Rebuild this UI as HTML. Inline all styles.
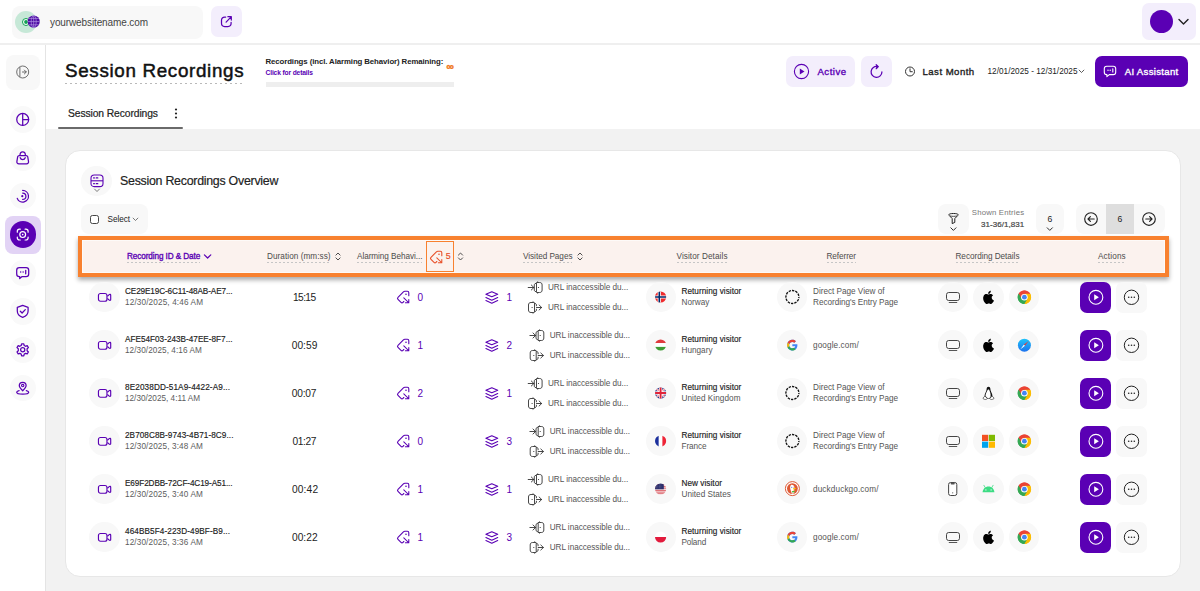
<!DOCTYPE html>
<html lang="en"><head><meta charset="utf-8"><title>Session Recordings</title>
<style>
*{margin:0;padding:0}
h1,h2{font-weight:400}
html,body{width:1200px;height:591px;overflow:hidden;background:#fff}
body{position:relative;font-family:"Liberation Sans",Arial,sans-serif;}
.t{position:absolute;white-space:nowrap;display:block}
svg{display:block;overflow:visible}
</style></head>
<body>
<header style="position:absolute;left:0;top:0;width:1200px;height:43px;background:#fff;border-bottom:2px solid #efefef">
<div style="position:absolute;left:12px;top:5.5px;width:191px;height:33px;background:#f8f8f8;border-radius:8px;"></div>
<div style="position:absolute;left:15px;top:11px;width:22px;height:22px;background:#c6e8d7;border-radius:11px;"></div>
<svg style="position:absolute;left:19px;top:14px;" width="22" height="16" viewBox="0 0 22 16" fill="none"><circle cx="7" cy="8" r="3.500" fill="#fff" stroke="#10a251" stroke-width="1"/><circle cx="7" cy="8" r="1.900" fill="#10a251"/><circle cx="14.700" cy="7.600" r="6.100" fill="#4c0aa3"/><g stroke="#b79be6" stroke-width="0.650" fill="none"><ellipse cx="14.700" cy="7.600" rx="2.500" ry="6.100"/><path d="M8.600 7.600 H20.800 M9.600 4.400 H19.800 M9.600 10.800 H19.800 M14.700 1.500 V13.700"/></g></svg>
<span class="t" style="left:50px;top:15.5px;font-size:10px;line-height:14px;color:#444;letter-spacing:-0.114px;">yourwebsitename.com</span>
<div style="position:absolute;left:211px;top:6px;width:31px;height:31px;background:#f3eefc;border-radius:7px;"><svg style="position:absolute;left:9px;top:9px;" width="13" height="13" viewBox="0 0 13 13" fill="none"><g transform="translate(0.5 0.5)"><path d="M5.2 1.6 H4.2 C2.2 1.6 1 2.8 1 4.8 V7.8 C1 9.8 2.2 11 4.2 11 H7.4 C9.4 11 10.6 9.8 10.6 7.8 V6.8" stroke="#5a00b4" stroke-width="1.25" stroke-linecap="round" stroke-linejoin="round"/><path d="M5.6 6.6 L10.6 1.4 M7.4 1.2 H10.8 V4.6" stroke="#5a00b4" stroke-width="1.25" stroke-linecap="round" stroke-linejoin="round"/></g></svg></div>
<div style="position:absolute;left:1142px;top:3px;width:54px;height:37px;background:#f3eefc;border-radius:7px;"></div>
<div style="position:absolute;left:1149.9px;top:10.2px;width:23px;height:23px;background:#5a00b4;border-radius:11.5px;"></div>
<svg style="position:absolute;left:1178px;top:18px;" width="11" height="8" viewBox="0 0 11 8" fill="none"><path d="M1 1.5 L5.5 6 L10 1.5" stroke="#222" stroke-width="1.4" stroke-linecap="round" stroke-linejoin="round"/></svg>
</header>
<aside style="position:absolute;left:0;top:45px;width:45px;height:546px;background:#fff;border-right:1px solid #e4e4e4"></aside>
<div style="position:absolute;left:5.5px;top:54.5px;width:34.5px;height:35px;background:#f8f8f8;border-radius:8px;"></div>
<svg style="position:absolute;left:15px;top:65px;" width="15" height="14" viewBox="0 0 15 14" fill="none"><g transform="translate(0.7 0)"><circle cx="7" cy="7" r="6" stroke="#5f5f5f" stroke-width="0.900"/><path d="M4.200 2 V12" stroke="#5f5f5f" stroke-width="0.900"/><path d="M6.800 7 H10.400 M8.700 5.100 L10.600 7 L8.700 8.900" stroke="#5f5f5f" stroke-width="0.950" stroke-linecap="round" stroke-linejoin="round"/></g></svg>
<div style="position:absolute;left:9.6px;top:106.2px;width:26.4px;height:26.4px;background:#f9f9f9;border-radius:13.2px;"></div>
<svg style="position:absolute;left:14px;top:111px;" width="17" height="17" viewBox="0 0 17 17" fill="none"><g transform="translate(0.7 0.4)"><circle cx="8" cy="8" r="5.950" stroke="#5a00b4" stroke-width="1.25" stroke-linecap="round" stroke-linejoin="round"/><path d="M8 2.100 V13.900 M8 8.300 H13.900" stroke="#5a00b4" stroke-width="1.25" stroke-linecap="round" stroke-linejoin="round"/></g></svg>
<div style="position:absolute;left:9.6px;top:144.6px;width:26.4px;height:26.4px;background:#f9f9f9;border-radius:13.2px;"></div>
<svg style="position:absolute;left:14px;top:149px;" width="17" height="17" viewBox="0 0 17 17" fill="none"><g transform="translate(0.7 0.8)"><path d="M4.500 5.700 H11.500 C12.300 5.700 12.800 6.100 13 6.900 L13.800 11.500 C14.100 13 13.200 14 11.800 14 H4.200 C2.800 14 1.900 13 2.200 11.500 L3 6.900 C3.200 6.100 3.700 5.700 4.500 5.700 Z" stroke="#5a00b4" stroke-width="1.25" stroke-linecap="round" stroke-linejoin="round"/><path d="M5.300 5.500 C5.300 3.400 6.300 2.100 8 2.100 C9.700 2.100 10.700 3.400 10.700 5.500" stroke="#5a00b4" stroke-width="1.25" stroke-linecap="round" stroke-linejoin="round"/><path d="M5.500 7.900 C5.900 9.200 6.800 9.800 8 9.800 C9.200 9.800 10.100 9.200 10.500 7.900" stroke="#5a00b4" stroke-width="1.25" stroke-linecap="round" stroke-linejoin="round"/></g></svg>
<div style="position:absolute;left:9.6px;top:183px;width:26.4px;height:26.4px;background:#f9f9f9;border-radius:13.2px;"></div>
<svg style="position:absolute;left:14px;top:188px;" width="17" height="17" viewBox="0 0 17 17" fill="none"><g transform="translate(0.7 0.2)"><path d="M8 2.2 A5.8 5.8 0 1 1 2.6 10.2" stroke="#5a00b4" stroke-width="1.25" stroke-linecap="round" stroke-linejoin="round"/><path d="M8 4.8 A3.2 3.2 0 0 1 8 11.2" stroke="#5a00b4" stroke-width="1.25" stroke-linecap="round" stroke-linejoin="round"/><circle cx="7.6" cy="8" r="1.1" fill="#5a00b4"/></g></svg>
<div style="position:absolute;left:4.5px;top:215.5px;width:36.5px;height:38.2px;background:#e2d3f5;border-radius:8px;"></div>
<div style="position:absolute;left:9.6px;top:221.4px;width:26.4px;height:26.4px;background:#5a00b4;border-radius:13.2px;"></div>
<svg style="position:absolute;left:14px;top:226px;" width="17" height="17" viewBox="0 0 17 17" fill="none"><g transform="translate(0.7 0.6)"><g stroke="#fff" stroke-width="1.2" stroke-linecap="round" fill="none"><path d="M2.6 5.6 V4.8 C2.6 3.4 3.4 2.6 4.8 2.6 H5.6 M10.4 2.6 H11.2 C12.6 2.6 13.4 3.4 13.4 4.8 V5.6 M13.4 10.4 V11.2 C13.4 12.6 12.6 13.4 11.2 13.4 H10.4 M5.6 13.4 H4.8 C3.4 13.4 2.6 12.6 2.6 11.2 V10.4"/><circle cx="8" cy="8" r="2.9"/><circle cx="8" cy="8" r="0.8" fill="#fff" stroke="none"/></g></g></svg>
<div style="position:absolute;left:9.6px;top:259.8px;width:26.4px;height:26.4px;background:#f9f9f9;border-radius:13.2px;"></div>
<svg style="position:absolute;left:14px;top:265px;" width="17" height="16" viewBox="0 0 17 16" fill="none"><g transform="translate(0.7 0)"><path d="M4.6 2.6 H11.4 C13 2.6 14 3.6 14 5.2 V9 C14 10.6 13 11.6 11.4 11.6 H7.4 L5 13.6 V11.6 H4.6 C3 11.6 2 10.6 2 9 V5.2 C2 3.6 3 2.6 4.600 2.6 Z" stroke="#5a00b4" stroke-width="1.25" stroke-linecap="round" stroke-linejoin="round"/><circle cx="6" cy="7.1" r="0.75" fill="#5a00b4"/><circle cx="8.4" cy="7.1" r="0.75" fill="#5a00b4"/><path d="M11 5.4 V8.8" stroke="#5a00b4" stroke-width="1.25" stroke-linecap="round" stroke-linejoin="round"/></g></svg>
<div style="position:absolute;left:9.6px;top:298.2px;width:26.4px;height:26.4px;background:#f9f9f9;border-radius:13.2px;"></div>
<svg style="position:absolute;left:14px;top:303px;" width="17" height="17" viewBox="0 0 17 17" fill="none"><g transform="translate(0.7 0.4)"><path d="M8 2 L13.4 4 V7.6 C13.4 10.6 11.4 12.8 8 14 C4.600 12.8 2.6 10.6 2.6 7.6 V4 Z" stroke="#5a00b4" stroke-width="1.25" stroke-linecap="round" stroke-linejoin="round"/><path d="M5.6 7.8 L7.4 9.6 L10.6 6.200" stroke="#5a00b4" stroke-width="1.25" stroke-linecap="round" stroke-linejoin="round"/></g></svg>
<div style="position:absolute;left:9.6px;top:336.6px;width:26.4px;height:26.4px;background:#f9f9f9;border-radius:13.2px;"></div>
<svg style="position:absolute;left:14px;top:341px;" width="17" height="17" viewBox="0 0 17 17" fill="none"><g transform="translate(0.7 0.8)"><circle cx="8" cy="8" r="2.1" stroke="#5a00b4" stroke-width="1.25" stroke-linecap="round" stroke-linejoin="round"/><path d="M6.9 2 H9.1 L9.5 3.700 L10.9 4.500 L12.5 3.900 L13.700 5.800 L12.4 7 V9 L13.700 10.2 L12.5 12.100 L10.9 11.5 L9.5 12.300 L9.1 14 H6.9 L6.5 12.300 L5.1 11.5 L3.500 12.100 L2.300 10.2 L3.600 9 V7 L2.300 5.800 L3.500 3.900 L5.1 4.500 L6.5 3.700 Z" stroke="#5a00b4" stroke-width="1.25" stroke-linecap="round" stroke-linejoin="round"/></g></svg>
<div style="position:absolute;left:9.6px;top:375px;width:26.4px;height:26.4px;background:#f9f9f9;border-radius:13.2px;"></div>
<svg style="position:absolute;left:14px;top:380px;" width="17" height="17" viewBox="0 0 17 17" fill="none"><g transform="translate(0.7 0.2)"><path d="M8 10.6 C5.600 8.4 4.600 6.900 4.600 5.400 C4.600 3.500 6.1 2.100 8 2.100 C9.900 2.100 11.4 3.500 11.4 5.400 C11.4 6.900 10.4 8.4 8 10.6 Z" stroke="#5a00b4" stroke-width="1.25" stroke-linecap="round" stroke-linejoin="round"/><circle cx="8" cy="5.400" r="1.2" stroke="#5a00b4" stroke-width="1.1"/><path d="M4.400 10.4 C2.900 10.800 2 11.400 2 12.100 C2 13.200 4.700 14 8 14 C11.300 14 14 13.200 14 12.100 C14 11.400 13.100 10.800 11.600 10.400" stroke="#5a00b4" stroke-width="1.25" stroke-linecap="round" stroke-linejoin="round"/></g></svg>
<section style="position:absolute;left:46px;top:45px;width:1154px;height:84px;background:#fff"></section>
<h1 class="t" style="left:65px;top:58.5px;font-size:18.8px;line-height:26px;color:#111;letter-spacing:0.680px;background:repeating-linear-gradient(90deg,#b9b9b9 0 2.5px,transparent 2.5px 5px) left bottom/100% 1px no-repeat;padding-bottom:1px;line-height:24px;-webkit-text-stroke:0.48px #111;">Session Recordings</h1>
<span class="t" style="left:265.5px;top:56px;font-size:7.8px;line-height:11px;font-weight:700;color:#222;letter-spacing:-0.084px;">Recordings (incl. Alarming Behavior) Remaining:</span>
<span class="t" style="left:265.5px;top:67.8px;font-size:6.7px;line-height:9px;font-weight:700;color:#5a00b4;letter-spacing:-0.145px;">Click for details</span>
<span class="t" style="left:446.4px;top:58.7px;font-size:10.5px;line-height:15px;font-weight:700;color:#f07a1f;-webkit-text-stroke:0.45px #f07a1f;">∞</span>
<div style="position:absolute;left:265.5px;top:82.3px;width:188.5px;height:5px;background:#eeeeee;border-radius:0px;"></div>
<div style="position:absolute;left:786px;top:56px;width:69px;height:31px;background:#f3eefc;border-radius:7px;"></div>
<svg style="position:absolute;left:793px;top:63px;" width="17" height="17" viewBox="0 0 17 17" fill="none"><g transform="translate(0.5 0.5)"><circle cx="8" cy="8" r="7.1" stroke="#5a00b4" stroke-width="1.1"/><path d="M6.300 5 L11 8 L6.300 11 Z" fill="#5a00b4"/></g></svg>
<span class="t" style="left:817.5px;top:65px;font-size:9.6px;line-height:13px;color:#5a00b4;letter-spacing:0.472px;-webkit-text-stroke:0.35px #5a00b4;">Active</span>
<div style="position:absolute;left:861px;top:56px;width:30.5px;height:31px;background:#f3eefc;border-radius:7px;"><svg style="position:absolute;left:8px;top:8px;" width="15" height="15" viewBox="0 0 15 15" fill="none"><path d="M12.900 7.900 A5.400 5.400 0 1 1 8.500 2.600" stroke="#5a00b4" stroke-width="1.25" stroke-linecap="round" stroke-linejoin="round"/><path d="M7.200 0.700 L9.300 2.600 L7.200 4.700" stroke="#5a00b4" stroke-width="1.25" stroke-linecap="round" stroke-linejoin="round" fill="#5a00b4"/></svg></div>
<svg style="position:absolute;left:904px;top:65px;" width="12" height="13" viewBox="0 0 12 13" fill="none"><g transform="translate(0 0.5)"><circle cx="6" cy="6" r="4.500" stroke="#333" stroke-width="1"/><path d="M6 3.300 V6.200 H8.300" stroke="#333" stroke-width="1" stroke-linecap="round" stroke-linejoin="round"/></g></svg>
<span class="t" style="left:922.5px;top:65px;font-size:9.6px;line-height:13px;color:#222;letter-spacing:0.470px;-webkit-text-stroke:0.35px #222;">Last Month</span>
<span class="t" style="left:987.5px;top:66px;font-size:8.2px;line-height:11px;color:#222;letter-spacing:0.035px;">12/01/2025 - 12/31/2025</span>
<svg style="position:absolute;left:1078px;top:69px;" width="7" height="5" viewBox="0 0 7 5" fill="none"><g transform="translate(0.5 0.5)"><path d="M0.6 0.6 L3 3 L5.4 0.6" stroke="#333" stroke-width="0.8" stroke-linecap="round" stroke-linejoin="round"/></g></svg>
<div style="position:absolute;left:1095.3px;top:56px;width:92.7px;height:31px;background:#5a00b4;border-radius:7px;"></div>
<svg style="position:absolute;left:1103px;top:65px;" width="14" height="13" viewBox="0 0 14 13" fill="none"><g transform="translate(0.5 0)"><path d="M3.200 1.200 H9.800 C11.300 1.200 12.200 2.100 12.200 3.600 V7.200 C12.200 8.700 11.300 9.600 9.800 9.600 H5.800 L3.400 11.600 V9.600 H3.200 C1.700 9.600 0.800 8.700 0.800 7.200 V3.600 C0.800 2.100 1.700 1.200 3.200 1.200 Z" stroke="#fff" stroke-width="1.1" stroke-linejoin="round"/><circle cx="4.500" cy="5.300" r="0.7" fill="#fff"/><circle cx="6.700" cy="5.300" r="0.7" fill="#fff"/><path d="M9.300 3.700 V6.900" stroke="#fff" stroke-width="1.1" stroke-linecap="round"/></g></svg>
<span class="t" style="left:1124.7px;top:65px;font-size:9.6px;line-height:13px;color:#fff;letter-spacing:0.316px;-webkit-text-stroke:0.35px #fff;">AI Assistant</span>
<span class="t" style="left:68px;top:106.5px;font-size:10.3px;line-height:14px;color:#222;letter-spacing:-0.093px;-webkit-text-stroke:0.2px #222;">Session Recordings</span>
<svg style="position:absolute;left:174px;top:108px;" width="4" height="11" viewBox="0 0 4 11" fill="none"><circle cx="2" cy="1.500" r="1.100" fill="#222"/><circle cx="2" cy="5.500" r="1.100" fill="#222"/><circle cx="2" cy="9.500" r="1.100" fill="#222"/></svg>
<div style="position:absolute;left:58px;top:127.2px;width:125.3px;height:1.7px;background:#6a6a6a;border-radius:1px;"></div>
<main style="position:absolute;left:46px;top:129px;width:1154px;height:462px;background:#f2f2f2"></main>
<div style="position:absolute;left:65.4px;top:149.7px;width:1115.6px;height:427.3px;background:#fff;border-radius:15px;box-sizing:border-box;border:1px solid #e7e7e7;"></div>
<div style="position:absolute;left:81.2px;top:165.7px;width:30.6px;height:30.6px;background:#f8f8f8;border-radius:15.3px;"></div>
<svg style="position:absolute;left:90px;top:173px;" width="14" height="15" viewBox="0 0 14 15" fill="none"><g transform="translate(0 0.8)"><rect x="1" y="1.200" width="12" height="11.600" rx="3.200" stroke="#5a00b4" stroke-width="1.100"/><path d="M1 7 H13" stroke="#5a00b4" stroke-width="1.100"/><path d="M3.600 4.100 H4.400 M6.200 4.100 H7.800 M3.600 9.900 H4.400 M6.200 9.900 H7.800" stroke="#5a00b4" stroke-width="1.2" stroke-linecap="round"/></g></svg>
<svg style="position:absolute;left:94px;top:188px;" width="6" height="5" viewBox="0 0 6 5" fill="none"><g transform="translate(0 0.5)"><path d="M0.6 0.6 L3 3 L5.4 0.6" stroke="#444" stroke-width="0.7" stroke-linecap="round" stroke-linejoin="round"/></g></svg>
<h2 class="t" style="left:120px;top:172.9px;font-size:12.4px;line-height:17px;color:#222;letter-spacing:-0.265px;-webkit-text-stroke:0.18px #222;">Session Recordings Overview</h2>
<div style="position:absolute;left:81px;top:204px;width:66.6px;height:30.4px;background:#f8f8f8;border-radius:8px;"></div>
<div style="position:absolute;left:89.6px;top:214.5px;width:9.6px;height:9.6px;background:#fff;border-radius:2.4px;box-sizing:border-box;border:1px solid #444;"></div>
<span class="t" style="left:107.5px;top:214px;font-size:8.2px;line-height:11px;color:#222;letter-spacing:-0.053px;">Select</span>
<svg style="position:absolute;left:132px;top:217px;" width="7" height="5" viewBox="0 0 7 5" fill="none"><g transform="translate(0.5 0.5)"><path d="M0.6 0.6 L3 3 L5.4 0.6" stroke="#444" stroke-width="0.7" stroke-linecap="round" stroke-linejoin="round"/></g></svg>
<div style="position:absolute;left:938px;top:204px;width:30.7px;height:30.3px;background:#f8f8f8;border-radius:8px;"></div>
<svg style="position:absolute;left:947px;top:213px;" width="13" height="12" viewBox="0 0 13 12" fill="none"><g transform="translate(0.5 0)"><path d="M1.400 1.600 C1.400 0.900 3.400 0.500 6 0.500 C8.600 0.500 10.600 0.900 10.600 1.600 C10.600 2.100 10.300 2.500 9.900 2.900 L7.300 5.600 V9.400 L4.700 10.600 V5.600 L2.100 2.900 C1.700 2.500 1.400 2.100 1.400 1.600 Z" stroke="#222" stroke-width="1" stroke-linejoin="round"/><path d="M2.600 2.900 C4.600 3.500 7.400 3.500 9.400 2.900" stroke="#222" stroke-width="0.800"/></g></svg>
<svg style="position:absolute;left:950px;top:227px;" width="7" height="5" viewBox="0 0 7 5" fill="none"><g transform="translate(0.4 0.3)"><path d="M0.4 0.5 L3 3.100 L5.6 0.5" stroke="#222" stroke-width="0.950" stroke-linecap="round" stroke-linejoin="round"/></g></svg>
<span class="t" style="right:175.7px;top:207.3px;font-size:7.8px;line-height:11px;color:#777;letter-spacing:0.168px;">Shown Entries</span>
<span class="t" style="right:175.7px;top:219px;font-size:8px;line-height:11px;color:#444;letter-spacing:0.060px;-webkit-text-stroke:0.2px #444;">31-36/1,831</span>
<div style="position:absolute;left:1036px;top:204px;width:27.8px;height:30.3px;background:#f8f8f8;border-radius:8px;"></div>
<span class="t" style="left:1049.8px;transform:translateX(-50%);top:213.2px;font-size:8.6px;line-height:12px;color:#222;">6</span>
<svg style="position:absolute;left:1046px;top:227px;" width="7" height="5" viewBox="0 0 7 5" fill="none"><g transform="translate(0.8 0.3)"><path d="M0.4 0.5 L3 3.100 L5.6 0.5" stroke="#222" stroke-width="0.950" stroke-linecap="round" stroke-linejoin="round"/></g></svg>
<div style="position:absolute;left:1075.8px;top:204px;width:89.2px;height:30.3px;background:#f8f8f8;border-radius:8px;overflow:hidden;"><div style="position:absolute;left:30.2px;top:0px;width:28px;height:30.3px;background:#dedede;border-radius:0px;"></div></div>
<svg style="position:absolute;left:1084px;top:212px;" width="14" height="14" viewBox="0 0 14 14" fill="none"><circle cx="7" cy="7" r="6.300" stroke="#222" stroke-width="1.150"/><path d="M10.200 7 H4 M6.400 4.600 L4 7 L6.400 9.400" stroke="#222" stroke-width="1.150" stroke-linecap="round" stroke-linejoin="round"/></svg>
<svg style="position:absolute;left:1142px;top:212px;transform:scaleX(-1);" width="14" height="14" viewBox="0 0 14 14" fill="none"><circle cx="7" cy="7" r="6.300" stroke="#222" stroke-width="1.150"/><path d="M10.200 7 H4 M6.400 4.600 L4 7 L6.400 9.400" stroke="#222" stroke-width="1.150" stroke-linecap="round" stroke-linejoin="round"/></svg>
<span class="t" style="left:1120px;transform:translateX(-50%);top:213.2px;font-size:8.6px;line-height:12px;color:#222;">6</span>
<div style="position:absolute;left:77.8px;top:235.8px;width:1091.4px;height:41px;background:#fbf2ee;border-radius:0px;box-sizing:border-box;border:4px solid #f8812f;box-shadow:-0.5px 3px 4.5px rgba(0,0,0,0.33),inset 0 0 0 1px rgba(255,255,255,0.6);"></div>
<span class="t" style="left:127px;top:250px;font-size:8.2px;line-height:11px;color:#5a00b4;letter-spacing:-0.105px;background:repeating-linear-gradient(90deg,#c6c6c6 0 2px,transparent 2px 4px) left bottom/100% 1px no-repeat;line-height:12px;padding-bottom:0px;margin-top:0.5px;-webkit-text-stroke:0.32px #5a00b4;">Recording ID &amp; Date</span>
<svg style="position:absolute;left:203px;top:253px;" width="10" height="7" viewBox="0 0 10 7" fill="none"><g transform="translate(0.2 0.8)"><path d="M1.2 1 L4.4 4.2 L7.6 1" stroke="#5a00b4" stroke-width="1.2" stroke-linecap="round" stroke-linejoin="round"/></g></svg>
<span class="t" style="left:267px;top:250px;font-size:8.2px;line-height:11px;color:#4c4c4c;letter-spacing:0.048px;background:repeating-linear-gradient(90deg,#c6c6c6 0 2px,transparent 2px 4px) left bottom/100% 1px no-repeat;line-height:12px;padding-bottom:0px;margin-top:0.5px;">Duration (mm:ss)</span>
<svg style="position:absolute;left:335px;top:252px;" width="6" height="9" viewBox="0 0 6 9" fill="none"><path d="M0.900 3.100 L3 1 L5.100 3.100 M0.900 5.900 L3 8 L5.100 5.900" stroke="#444" stroke-width="0.950" stroke-linecap="round" stroke-linejoin="round"/></svg>
<span class="t" style="left:357px;top:250px;font-size:8.2px;line-height:11px;color:#4c4c4c;letter-spacing:-0.056px;background:repeating-linear-gradient(90deg,#c6c6c6 0 2px,transparent 2px 4px) left bottom/100% 1px no-repeat;line-height:12px;padding-bottom:0px;margin-top:0.5px;">Alarming Behavi...</span>
<div style="position:absolute;left:426px;top:241.3px;width:28px;height:30.5px;background:transparent;border-radius:0px;box-sizing:border-box;border:1px solid #f8812f;"></div>
<svg style="position:absolute;left:429px;top:250px;" width="15" height="14" viewBox="0 0 15 14" fill="none"><g transform="translate(0.5 0)"><path d="M12.300 5.800 V2.700 C12.300 1.800 11.800 1.300 10.900 1.300 H8.300 C7.700 1.300 7.300 1.500 6.900 1.900 L1.500 7.300 C0.900 7.900 0.900 8.700 1.500 9.300 L4.500 12.300 C5.100 12.900 5.900 12.900 6.500 12.300 L7.300 11.500" stroke="#e8502a" stroke-width="1.100" stroke-linecap="round" stroke-linejoin="round"/><circle cx="9.500" cy="4.300" r="0.800" fill="#e8502a"/><path d="M7.300 7.800 L12 12.500 M12.300 9.400 V12.800 H8.900" stroke="#e8502a" stroke-width="1.050" stroke-linecap="round" stroke-linejoin="round"/></g></svg>
<span class="t" style="left:445.8px;top:250.2px;font-size:8.8px;line-height:12px;color:#e8502a;-webkit-text-stroke:0.2px #e8502a;">5</span>
<svg style="position:absolute;left:457px;top:252px;" width="7" height="9" viewBox="0 0 7 9" fill="none"><g transform="translate(0.5 0)"><path d="M0.900 3.100 L3 1 L5.100 3.100 M0.900 5.900 L3 8 L5.100 5.900" stroke="#444" stroke-width="0.950" stroke-linecap="round" stroke-linejoin="round"/></g></svg>
<span class="t" style="left:523px;top:250px;font-size:8.2px;line-height:11px;color:#4c4c4c;letter-spacing:-0.035px;background:repeating-linear-gradient(90deg,#c6c6c6 0 2px,transparent 2px 4px) left bottom/100% 1px no-repeat;line-height:12px;padding-bottom:0px;margin-top:0.5px;">Visited Pages</span>
<svg style="position:absolute;left:577px;top:252px;" width="6" height="9" viewBox="0 0 6 9" fill="none"><path d="M0.900 3.100 L3 1 L5.100 3.100 M0.900 5.900 L3 8 L5.100 5.900" stroke="#444" stroke-width="0.950" stroke-linecap="round" stroke-linejoin="round"/></svg>
<span class="t" style="left:676.5px;top:250px;font-size:8.2px;line-height:11px;color:#4c4c4c;letter-spacing:0.078px;background:repeating-linear-gradient(90deg,#c6c6c6 0 2px,transparent 2px 4px) left bottom/100% 1px no-repeat;line-height:12px;padding-bottom:0px;margin-top:0.5px;">Visitor Details</span>
<span class="t" style="left:826.5px;top:250px;font-size:8.2px;line-height:11px;color:#4c4c4c;letter-spacing:-0.076px;background:repeating-linear-gradient(90deg,#c6c6c6 0 2px,transparent 2px 4px) left bottom/100% 1px no-repeat;line-height:12px;padding-bottom:0px;margin-top:0.5px;">Referrer</span>
<span class="t" style="left:955.5px;top:250px;font-size:8.2px;line-height:11px;color:#4c4c4c;letter-spacing:-0.039px;background:repeating-linear-gradient(90deg,#c6c6c6 0 2px,transparent 2px 4px) left bottom/100% 1px no-repeat;line-height:12px;padding-bottom:0px;margin-top:0.5px;">Recording Details</span>
<span class="t" style="left:1098px;top:250px;font-size:8.2px;line-height:11px;color:#4c4c4c;letter-spacing:0.140px;background:repeating-linear-gradient(90deg,#c6c6c6 0 2px,transparent 2px 4px) left bottom/100% 1px no-repeat;line-height:12px;padding-bottom:0px;margin-top:0.5px;">Actions</span>
<div>
<div style="position:absolute;left:89.3px;top:281.8px;width:30.4px;height:30.4px;background:#f8f8f8;border-radius:15.2px;"></div>
<svg style="position:absolute;left:97px;top:292px;" width="15" height="11" viewBox="0 0 15 11" fill="none"><g transform="translate(0.7 0.7)"><rect x="0.750" y="0.750" width="8.500" height="7.800" rx="2" stroke="#5a00b4" stroke-width="1.150"/><path d="M9.700 3.500 L11.500 1.900 C12.300 1.300 13 1.700 13 2.600 V6.700 C13 7.600 12.300 8 11.500 7.400 L9.700 5.800" stroke="#5a00b4" stroke-width="1.150" stroke-linejoin="round"/></g></svg>
<span class="t" style="left:125px;top:285.6px;font-size:8.2px;line-height:11px;color:#222;letter-spacing:-0.122px;-webkit-text-stroke:0.15px #222;">CE29E19C-6C11-48AB-AE7...</span>
<span class="t" style="left:125px;top:297px;font-size:8.2px;line-height:11px;color:#5c5c5c;letter-spacing:0.135px;">12/30/2025, 4:46 AM</span>
<span class="t" style="left:293px;top:290.6px;font-size:10.2px;line-height:14px;color:#222;letter-spacing:-0.600px;">15:15</span>
<svg style="position:absolute;left:396px;top:290px;" width="15" height="14" viewBox="0 0 15 14" fill="none"><g transform="translate(0.5 0)"><path d="M12.300 5.800 V2.700 C12.300 1.800 11.800 1.300 10.900 1.300 H8.300 C7.700 1.300 7.300 1.500 6.900 1.900 L1.500 7.300 C0.900 7.900 0.900 8.700 1.500 9.300 L4.500 12.300 C5.100 12.900 5.900 12.900 6.500 12.300 L7.300 11.500" stroke="#5a00b4" stroke-width="1.100" stroke-linecap="round" stroke-linejoin="round"/><circle cx="9.500" cy="4.300" r="0.800" fill="#5a00b4"/><path d="M7.300 7.800 L12 12.500 M12.300 9.400 V12.800 H8.900" stroke="#5a00b4" stroke-width="1.050" stroke-linecap="round" stroke-linejoin="round"/></g></svg>
<span class="t" style="left:417.4px;top:290.9px;font-size:10px;line-height:14px;color:#5a00b4;">0</span>
<svg style="position:absolute;left:484px;top:290px;" width="15" height="15" viewBox="0 0 15 15" fill="none"><g transform="translate(0.7 0.7)"><path d="M7.100 1.100 L13 3.600 L7.100 6.100 L1.200 3.600 Z" stroke="#5a00b4" stroke-width="1.100" stroke-linejoin="round"/><path d="M1.200 6.900 L7.100 9.500 L13 6.900 M1.200 9.900 L7.100 12.500 L13 9.900" stroke="#5a00b4" stroke-width="1.100" stroke-linecap="round" stroke-linejoin="round"/></g></svg>
<span class="t" style="left:506.4px;top:290.9px;font-size:10px;line-height:14px;color:#5a00b4;">1</span>
<svg style="position:absolute;left:528px;top:281px;" width="15" height="13" viewBox="0 0 15 13" fill="none"><g transform="translate(0 0.5)"><path d="M0.200 6 H5.800 M3.300 3.500 L5.900 6 L3.300 8.500" stroke="#333" stroke-width="0.900" stroke-linecap="round" stroke-linejoin="round"/><path d="M9.800 0.300 L6.300 2.900 V9.100 L9.800 11.700" stroke="#333" stroke-width="0.900" stroke-linejoin="round" stroke-linecap="round"/><path d="M8.500 1.600 V10.400" stroke="#333" stroke-width="0.900"/><path d="M9 1 H11.600 C13.300 1 14.100 1.900 14.100 3.500 V8.500 C14.100 10.100 13.300 11 11.600 11 H9" stroke="#333" stroke-width="0.900"/><circle cx="10.500" cy="6" r="0.600" fill="#333"/></g></svg>
<svg style="position:absolute;left:527px;top:301px;" width="16" height="13" viewBox="0 0 16 13" fill="none"><g transform="translate(0.7 0.5)"><path d="M8.800 6 H13.900 M11.400 3.500 L14 6 L11.400 8.500" stroke="#333" stroke-width="0.900" stroke-linecap="round" stroke-linejoin="round"/><path d="M6 1 H3.300 C1.600 1 0.800 1.900 0.800 3.500 V8.500 C0.800 10.100 1.600 11 3.300 11 H6" stroke="#333" stroke-width="0.900"/><path d="M6.800 1.600 V10.400" stroke="#333" stroke-width="0.900"/><path d="M5.300 0.300 L8.700 2.900 V4.300 M8.700 7.700 V9.100 L5.300 11.700" stroke="#333" stroke-width="0.900" stroke-linejoin="round" stroke-linecap="round"/><circle cx="4.400" cy="6" r="0.600" fill="#333"/></g></svg>
<span class="t" style="left:548px;top:281.8px;font-size:8.2px;line-height:11px;color:#555;letter-spacing:-0.041px;">URL inaccessible du...</span>
<span class="t" style="left:548px;top:301.5px;font-size:8.2px;line-height:11px;color:#555;letter-spacing:-0.041px;">URL inaccessible du...</span>
<div style="position:absolute;left:645.8px;top:281.8px;width:30.4px;height:30.4px;background:#f8f8f8;border-radius:15.2px;"></div>
<svg style="position:absolute;left:654px;top:291px;" width="13" height="12" viewBox="0 0 13 12" fill="none"><g transform="translate(0.6 0)"><clipPath id="fc_no"><circle cx="6" cy="6" r="5.600"/></clipPath><g clip-path="url(#fc_no)"><rect width="12" height="12" fill="#ef2b2d"/><path d="M0 6 H12 M4.700 0 V12" stroke="#fff" stroke-width="3.200"/><path d="M0 6 H12 M4.700 0 V12" stroke="#002868" stroke-width="1.600"/></g></g></svg>
<span class="t" style="left:681.5px;top:285.8px;font-size:8.2px;line-height:11px;color:#222;letter-spacing:0.040px;-webkit-text-stroke:0.15px #222;">Returning visitor</span>
<span class="t" style="left:681.5px;top:297.1px;font-size:8.2px;line-height:11px;color:#555;letter-spacing:0.007px;">Norway</span>
<div style="position:absolute;left:777.1px;top:281.8px;width:30.4px;height:30.4px;background:#f8f8f8;border-radius:15.2px;"></div>
<svg style="position:absolute;left:784px;top:289px;" width="17" height="16" viewBox="0 0 17 16" fill="none"><g transform="translate(0.4 0)"><circle cx="8" cy="8" r="6.500" stroke="#111" stroke-width="1.350" stroke-dasharray="2.350 1.053" stroke-dashoffset="1.175"/></g></svg>
<span class="t" style="left:813px;top:285.8px;font-size:8.2px;line-height:11px;color:#555;letter-spacing:-0.015px;">Direct Page View of</span>
<span class="t" style="left:813px;top:297.1px;font-size:8.2px;line-height:11px;color:#555;letter-spacing:-0.036px;">Recording's Entry Page</span>
<div style="position:absolute;left:937.6px;top:282.1px;width:30.4px;height:30.4px;background:#f8f8f8;border-radius:15.2px;"></div>
<div style="position:absolute;left:973.3px;top:282.1px;width:30.4px;height:30.4px;background:#f8f8f8;border-radius:15.2px;"></div>
<div style="position:absolute;left:1009.1px;top:282.1px;width:30.4px;height:30.4px;background:#f8f8f8;border-radius:15.2px;"></div>
<svg style="position:absolute;left:945px;top:291px;" width="16" height="14" viewBox="0 0 16 14" fill="none"><rect x="1.500" y="1.500" width="13" height="8" rx="2.200" stroke="#444" stroke-width="1"/><path d="M4.200 11.500 H11.800" stroke="#555" stroke-width="1" stroke-linecap="round"/></svg>
<svg style="position:absolute;left:982px;top:290px;" width="13" height="15" viewBox="0 0 13 15" fill="none"><g transform="translate(0.5 0.3)"><path d="M9.200 7.400 C9.200 5.800 10.500 5.100 10.600 5 C9.800 3.900 8.700 3.800 8.300 3.700 C7.300 3.600 6.400 4.300 5.900 4.300 C5.400 4.300 4.600 3.700 3.800 3.800 C2.700 3.800 1.700 4.400 1.200 5.400 C0 7.400 0.900 10.400 2 12 C2.600 12.800 3.200 13.700 4.100 13.600 C5 13.600 5.300 13.100 6.300 13.100 C7.300 13.100 7.600 13.600 8.500 13.600 C9.400 13.600 10 12.800 10.500 12 C11.200 11.100 11.400 10.200 11.400 10.100 C11.400 10.100 9.200 9.300 9.200 7.400 Z" fill="#000"/><path d="M7.600 2.600 C8.100 2 8.400 1.200 8.300 0.400 C7.600 0.400 6.800 0.900 6.300 1.400 C5.900 1.900 5.500 2.800 5.600 3.500 C6.400 3.600 7.100 3.200 7.600 2.600 Z" fill="#000"/></g></svg>
<svg style="position:absolute;left:1017px;top:290px;" width="15" height="15" viewBox="0 0 15 15" fill="none"><g transform="translate(0.4 0.2)"><circle cx="7" cy="7" r="6.700" fill="#fff"/><path d="M7 7 L1.200 3.650 A6.700 6.700 0 0 1 12.800 3.650 Z" fill="#ea4335"/><path d="M7 7 L12.800 3.650 A6.700 6.700 0 0 1 7 13.700 Z" fill="#fbbc04"/><path d="M7 7 L7 13.700 A6.700 6.700 0 0 1 1.200 3.650 Z" fill="#34a853"/><path d="M7 3.650 H12.800 A6.700 6.700 0 0 0 1.200 3.650 L4.100 8.680 Z" fill="#ea4335"/><path d="M9.900 8.680 L12.800 3.650 H7 Z" fill="#fbbc04"/><path d="M9.900 8.680 L7 13.700 A6.700 6.700 0 0 0 12.800 3.650 Z" fill="#fbbc04"/><path d="M4.100 8.680 L1.200 3.650 A6.700 6.700 0 0 0 7 13.700 L9.900 8.680 Z" fill="#34a853"/><circle cx="7" cy="7" r="3.300" fill="#fff"/><circle cx="7" cy="7" r="2.400" fill="#4285f4"/></g></svg>
<div style="position:absolute;left:1080px;top:281.8px;width:30.7px;height:31px;background:#5a00b4;border-radius:7px;"></div>
<svg style="position:absolute;left:1087px;top:289px;" width="17" height="17" viewBox="0 0 17 17" fill="none"><g transform="translate(0.9 0.3)"><circle cx="8" cy="8" r="6.900" stroke="#fff" stroke-width="1.1"/><path d="M6.300 5 L11 8 L6.300 11 Z" fill="#fff"/></g></svg>
<div style="position:absolute;left:1116px;top:281.8px;width:30.7px;height:31px;background:#f8f8f8;border-radius:7px;"></div>
<svg style="position:absolute;left:1123px;top:289px;" width="17" height="17" viewBox="0 0 17 17" fill="none"><g transform="translate(0.5 0.3)"><circle cx="8" cy="8" r="7.200" stroke="#222" stroke-width="1"/><circle cx="5.200" cy="8" r="0.800" fill="#222"/><circle cx="8" cy="8" r="0.800" fill="#222"/><circle cx="10.800" cy="8" r="0.800" fill="#222"/></g></svg>
</div>
<div>
<div style="position:absolute;left:89.3px;top:329.8px;width:30.4px;height:30.4px;background:#f8f8f8;border-radius:15.2px;"></div>
<svg style="position:absolute;left:97px;top:340px;" width="15" height="11" viewBox="0 0 15 11" fill="none"><g transform="translate(0.7 0.7)"><rect x="0.750" y="0.750" width="8.500" height="7.800" rx="2" stroke="#5a00b4" stroke-width="1.150"/><path d="M9.700 3.500 L11.500 1.900 C12.300 1.300 13 1.700 13 2.600 V6.700 C13 7.600 12.300 8 11.500 7.400 L9.700 5.800" stroke="#5a00b4" stroke-width="1.150" stroke-linejoin="round"/></g></svg>
<span class="t" style="left:125px;top:333.6px;font-size:8.2px;line-height:11px;color:#222;letter-spacing:0.004px;-webkit-text-stroke:0.15px #222;">AFE54F03-243B-47EE-8F7...</span>
<span class="t" style="left:125px;top:345px;font-size:8.2px;line-height:11px;color:#5c5c5c;letter-spacing:0.068px;">12/30/2025, 4:16 AM</span>
<span class="t" style="left:291.7px;top:338.6px;font-size:10.2px;line-height:14px;color:#222;letter-spacing:0.050px;">00:59</span>
<svg style="position:absolute;left:396px;top:338px;" width="15" height="14" viewBox="0 0 15 14" fill="none"><g transform="translate(0.5 0)"><path d="M12.300 5.800 V2.700 C12.300 1.800 11.800 1.300 10.900 1.300 H8.300 C7.700 1.300 7.300 1.500 6.900 1.900 L1.500 7.300 C0.900 7.900 0.900 8.700 1.500 9.300 L4.500 12.300 C5.100 12.900 5.900 12.900 6.500 12.300 L7.300 11.500" stroke="#5a00b4" stroke-width="1.100" stroke-linecap="round" stroke-linejoin="round"/><circle cx="9.500" cy="4.300" r="0.800" fill="#5a00b4"/><path d="M7.300 7.800 L12 12.500 M12.300 9.400 V12.800 H8.900" stroke="#5a00b4" stroke-width="1.050" stroke-linecap="round" stroke-linejoin="round"/></g></svg>
<span class="t" style="left:417.4px;top:338.9px;font-size:10px;line-height:14px;color:#5a00b4;">1</span>
<svg style="position:absolute;left:484px;top:338px;" width="15" height="15" viewBox="0 0 15 15" fill="none"><g transform="translate(0.7 0.7)"><path d="M7.100 1.100 L13 3.600 L7.100 6.100 L1.200 3.600 Z" stroke="#5a00b4" stroke-width="1.100" stroke-linejoin="round"/><path d="M1.200 6.900 L7.100 9.500 L13 6.900 M1.200 9.900 L7.100 12.500 L13 9.900" stroke="#5a00b4" stroke-width="1.100" stroke-linecap="round" stroke-linejoin="round"/></g></svg>
<span class="t" style="left:506.4px;top:338.9px;font-size:10px;line-height:14px;color:#5a00b4;">2</span>
<svg style="position:absolute;left:529px;top:329px;" width="16" height="13" viewBox="0 0 16 13" fill="none"><g transform="translate(0.7 0.5)"><path d="M0.200 6 H5.800 M3.300 3.500 L5.900 6 L3.300 8.500" stroke="#333" stroke-width="0.900" stroke-linecap="round" stroke-linejoin="round"/><path d="M9.800 0.300 L6.300 2.900 V9.100 L9.800 11.700" stroke="#333" stroke-width="0.900" stroke-linejoin="round" stroke-linecap="round"/><path d="M8.500 1.600 V10.400" stroke="#333" stroke-width="0.900"/><path d="M9 1 H11.600 C13.300 1 14.100 1.900 14.100 3.500 V8.500 C14.100 10.100 13.300 11 11.600 11 H9" stroke="#333" stroke-width="0.900"/><circle cx="10.500" cy="6" r="0.600" fill="#333"/></g></svg>
<svg style="position:absolute;left:529px;top:349px;" width="16" height="13" viewBox="0 0 16 13" fill="none"><g transform="translate(0.4 0.5)"><path d="M8.800 6 H13.900 M11.400 3.500 L14 6 L11.400 8.500" stroke="#333" stroke-width="0.900" stroke-linecap="round" stroke-linejoin="round"/><path d="M6 1 H3.300 C1.600 1 0.800 1.900 0.800 3.500 V8.500 C0.800 10.100 1.600 11 3.300 11 H6" stroke="#333" stroke-width="0.900"/><path d="M6.800 1.600 V10.400" stroke="#333" stroke-width="0.900"/><path d="M5.300 0.300 L8.700 2.900 V4.300 M8.700 7.700 V9.100 L5.300 11.700" stroke="#333" stroke-width="0.900" stroke-linejoin="round" stroke-linecap="round"/><circle cx="4.400" cy="6" r="0.600" fill="#333"/></g></svg>
<span class="t" style="left:549.7px;top:329.8px;font-size:8.2px;line-height:11px;color:#555;letter-spacing:-0.041px;">URL inaccessible du...</span>
<span class="t" style="left:549.7px;top:349.5px;font-size:8.2px;line-height:11px;color:#555;letter-spacing:-0.041px;">URL inaccessible du...</span>
<div style="position:absolute;left:645.8px;top:329.8px;width:30.4px;height:30.4px;background:#f8f8f8;border-radius:15.2px;"></div>
<svg style="position:absolute;left:654px;top:339px;" width="13" height="12" viewBox="0 0 13 12" fill="none"><g transform="translate(0.6 0)"><clipPath id="fc_hu"><circle cx="6" cy="6" r="5.600"/></clipPath><g clip-path="url(#fc_hu)"><rect width="12" height="4.100" fill="#e03a3e"/><rect y="4.100" width="12" height="3.800" fill="#fff"/><rect y="7.900" width="12" height="4.100" fill="#3f9c35"/></g></g></svg>
<span class="t" style="left:681.5px;top:333.8px;font-size:8.2px;line-height:11px;color:#222;letter-spacing:0.040px;-webkit-text-stroke:0.15px #222;">Returning visitor</span>
<span class="t" style="left:681.5px;top:345.1px;font-size:8.2px;line-height:11px;color:#555;letter-spacing:0.008px;">Hungary</span>
<div style="position:absolute;left:777.1px;top:329.8px;width:30.4px;height:30.4px;background:#f8f8f8;border-radius:15.2px;"></div>
<svg style="position:absolute;left:787px;top:338px;" width="11" height="13" viewBox="0 0 11 13" fill="none"><g transform="translate(0 0.8) scale(0.875 0.8788)"><path d="M11.800 6.100 H6.100 V8.400 H9.400 C9.100 9.900 7.800 10.800 6.100 10.800 C4.100 10.800 2.500 9.200 2.500 7.200 C2.500 5.200 4.100 3.600 6.100 3.600 C7 3.600 7.800 3.900 8.400 4.500 L10.100 2.800 C9 1.800 7.700 1.200 6.100 1.200 C2.800 1.200 0.100 3.900 0.100 7.200 C0.100 10.500 2.800 13.200 6.100 13.200 C9.600 13.200 11.900 10.800 11.900 7.300 C11.900 6.900 11.900 6.500 11.800 6.100 Z" fill="#4285f4"/><path d="M0.750 4.500 L2.700 6 C3.200 4.600 4.500 3.600 6.100 3.600 C7 3.600 7.800 3.900 8.400 4.500 L10.100 2.800 C9 1.800 7.700 1.200 6.100 1.200 C3.800 1.200 1.750 2.500 0.750 4.500 Z" fill="#ea4335"/><path d="M0.750 4.500 C0.350 5.300 0.100 6.200 0.100 7.200 C0.100 8.200 0.350 9.100 0.750 9.900 L2.700 8.400 C2.600 8 2.500 7.600 2.500 7.200 C2.500 6.800 2.600 6.400 2.700 6 Z" fill="#fbbc05"/><path d="M6.100 13.200 C7.700 13.200 9 12.700 10 11.800 L8.100 10.300 C7.600 10.600 6.900 10.800 6.100 10.800 C4.500 10.800 3.200 9.800 2.700 8.400 L0.750 9.900 C1.750 11.900 3.800 13.200 6.100 13.200 Z" fill="#34a853"/></g></svg>
<span class="t" style="left:813px;top:339.6px;font-size:8.2px;line-height:11px;color:#555;letter-spacing:0.109px;">google.com/</span>
<div style="position:absolute;left:937.6px;top:330.1px;width:30.4px;height:30.4px;background:#f8f8f8;border-radius:15.2px;"></div>
<div style="position:absolute;left:973.3px;top:330.1px;width:30.4px;height:30.4px;background:#f8f8f8;border-radius:15.2px;"></div>
<div style="position:absolute;left:1009.1px;top:330.1px;width:30.4px;height:30.4px;background:#f8f8f8;border-radius:15.2px;"></div>
<svg style="position:absolute;left:945px;top:339px;" width="16" height="14" viewBox="0 0 16 14" fill="none"><rect x="1.500" y="1.500" width="13" height="8" rx="2.200" stroke="#444" stroke-width="1"/><path d="M4.200 11.500 H11.800" stroke="#555" stroke-width="1" stroke-linecap="round"/></svg>
<svg style="position:absolute;left:982px;top:338px;" width="13" height="15" viewBox="0 0 13 15" fill="none"><g transform="translate(0.5 0.3)"><path d="M9.200 7.400 C9.200 5.800 10.500 5.100 10.600 5 C9.800 3.900 8.700 3.800 8.300 3.700 C7.300 3.600 6.400 4.300 5.900 4.300 C5.400 4.300 4.600 3.700 3.800 3.800 C2.700 3.800 1.700 4.400 1.200 5.400 C0 7.400 0.900 10.400 2 12 C2.600 12.800 3.200 13.700 4.100 13.600 C5 13.600 5.300 13.100 6.300 13.100 C7.300 13.100 7.600 13.600 8.500 13.600 C9.400 13.600 10 12.800 10.500 12 C11.200 11.100 11.400 10.200 11.400 10.100 C11.400 10.100 9.200 9.300 9.200 7.400 Z" fill="#000"/><path d="M7.600 2.600 C8.100 2 8.400 1.200 8.300 0.400 C7.600 0.400 6.800 0.900 6.300 1.400 C5.900 1.900 5.500 2.800 5.600 3.500 C6.400 3.600 7.100 3.200 7.600 2.600 Z" fill="#000"/></g></svg>
<svg style="position:absolute;left:1017px;top:338px;" width="15" height="15" viewBox="0 0 15 15" fill="none"><g transform="translate(0.4 0.2)"><defs><linearGradient id="sfg" x1="0" y1="0" x2="0" y2="1"><stop offset="0" stop-color="#1fc4fa"/><stop offset="1" stop-color="#1c72ee"/></linearGradient></defs><circle cx="7" cy="7" r="6.500" fill="url(#sfg)"/><path d="M11.200 2.800 L7.550 7.550 L6.450 6.450 Z" fill="#f5352c"/><path d="M2.800 11.200 L6.450 6.450 L7.550 7.550 Z" fill="#fff"/></g></svg>
<div style="position:absolute;left:1080px;top:329.8px;width:30.7px;height:31px;background:#5a00b4;border-radius:7px;"></div>
<svg style="position:absolute;left:1087px;top:337px;" width="17" height="17" viewBox="0 0 17 17" fill="none"><g transform="translate(0.9 0.3)"><circle cx="8" cy="8" r="6.900" stroke="#fff" stroke-width="1.1"/><path d="M6.300 5 L11 8 L6.300 11 Z" fill="#fff"/></g></svg>
<div style="position:absolute;left:1116px;top:329.8px;width:30.7px;height:31px;background:#f8f8f8;border-radius:7px;"></div>
<svg style="position:absolute;left:1123px;top:337px;" width="17" height="17" viewBox="0 0 17 17" fill="none"><g transform="translate(0.5 0.3)"><circle cx="8" cy="8" r="7.200" stroke="#222" stroke-width="1"/><circle cx="5.200" cy="8" r="0.800" fill="#222"/><circle cx="8" cy="8" r="0.800" fill="#222"/><circle cx="10.800" cy="8" r="0.800" fill="#222"/></g></svg>
</div>
<div>
<div style="position:absolute;left:89.3px;top:377.8px;width:30.4px;height:30.4px;background:#f8f8f8;border-radius:15.2px;"></div>
<svg style="position:absolute;left:97px;top:388px;" width="15" height="11" viewBox="0 0 15 11" fill="none"><g transform="translate(0.7 0.7)"><rect x="0.750" y="0.750" width="8.500" height="7.800" rx="2" stroke="#5a00b4" stroke-width="1.150"/><path d="M9.700 3.500 L11.500 1.900 C12.300 1.300 13 1.700 13 2.600 V6.700 C13 7.600 12.300 8 11.500 7.400 L9.700 5.800" stroke="#5a00b4" stroke-width="1.150" stroke-linejoin="round"/></g></svg>
<span class="t" style="left:125px;top:381.6px;font-size:8.2px;line-height:11px;color:#222;letter-spacing:0.112px;-webkit-text-stroke:0.15px #222;">8E2038DD-51A9-4422-A9...</span>
<span class="t" style="left:125px;top:393px;font-size:8.2px;line-height:11px;color:#5c5c5c;letter-spacing:0.007px;">12/30/2025, 4:11 AM</span>
<span class="t" style="left:291.7px;top:386.6px;font-size:10.2px;line-height:14px;color:#222;letter-spacing:-0.175px;">00:07</span>
<svg style="position:absolute;left:396px;top:386px;" width="15" height="14" viewBox="0 0 15 14" fill="none"><g transform="translate(0.5 0)"><path d="M12.300 5.800 V2.700 C12.300 1.800 11.800 1.300 10.900 1.300 H8.300 C7.700 1.300 7.300 1.500 6.900 1.900 L1.500 7.300 C0.900 7.900 0.900 8.700 1.500 9.300 L4.500 12.300 C5.100 12.900 5.900 12.900 6.500 12.300 L7.300 11.500" stroke="#5a00b4" stroke-width="1.100" stroke-linecap="round" stroke-linejoin="round"/><circle cx="9.500" cy="4.300" r="0.800" fill="#5a00b4"/><path d="M7.300 7.800 L12 12.500 M12.300 9.400 V12.800 H8.900" stroke="#5a00b4" stroke-width="1.050" stroke-linecap="round" stroke-linejoin="round"/></g></svg>
<span class="t" style="left:417.4px;top:386.9px;font-size:10px;line-height:14px;color:#5a00b4;">2</span>
<svg style="position:absolute;left:484px;top:386px;" width="15" height="15" viewBox="0 0 15 15" fill="none"><g transform="translate(0.7 0.7)"><path d="M7.100 1.100 L13 3.600 L7.100 6.100 L1.200 3.600 Z" stroke="#5a00b4" stroke-width="1.100" stroke-linejoin="round"/><path d="M1.200 6.900 L7.100 9.500 L13 6.900 M1.200 9.900 L7.100 12.500 L13 9.900" stroke="#5a00b4" stroke-width="1.100" stroke-linecap="round" stroke-linejoin="round"/></g></svg>
<span class="t" style="left:506.4px;top:386.9px;font-size:10px;line-height:14px;color:#5a00b4;">1</span>
<svg style="position:absolute;left:528px;top:377px;" width="15" height="13" viewBox="0 0 15 13" fill="none"><g transform="translate(0 0.5)"><path d="M0.200 6 H5.800 M3.300 3.500 L5.900 6 L3.300 8.500" stroke="#333" stroke-width="0.900" stroke-linecap="round" stroke-linejoin="round"/><path d="M9.800 0.300 L6.300 2.900 V9.100 L9.800 11.700" stroke="#333" stroke-width="0.900" stroke-linejoin="round" stroke-linecap="round"/><path d="M8.500 1.600 V10.400" stroke="#333" stroke-width="0.900"/><path d="M9 1 H11.600 C13.300 1 14.100 1.900 14.100 3.500 V8.500 C14.100 10.100 13.300 11 11.600 11 H9" stroke="#333" stroke-width="0.900"/><circle cx="10.500" cy="6" r="0.600" fill="#333"/></g></svg>
<svg style="position:absolute;left:527px;top:397px;" width="16" height="13" viewBox="0 0 16 13" fill="none"><g transform="translate(0.7 0.5)"><path d="M8.800 6 H13.900 M11.400 3.500 L14 6 L11.400 8.500" stroke="#333" stroke-width="0.900" stroke-linecap="round" stroke-linejoin="round"/><path d="M6 1 H3.300 C1.600 1 0.800 1.900 0.800 3.500 V8.500 C0.800 10.100 1.600 11 3.300 11 H6" stroke="#333" stroke-width="0.900"/><path d="M6.800 1.600 V10.400" stroke="#333" stroke-width="0.900"/><path d="M5.300 0.300 L8.700 2.900 V4.300 M8.700 7.700 V9.100 L5.300 11.700" stroke="#333" stroke-width="0.900" stroke-linejoin="round" stroke-linecap="round"/><circle cx="4.400" cy="6" r="0.600" fill="#333"/></g></svg>
<span class="t" style="left:548px;top:377.8px;font-size:8.2px;line-height:11px;color:#555;letter-spacing:-0.041px;">URL inaccessible du...</span>
<span class="t" style="left:548px;top:397.5px;font-size:8.2px;line-height:11px;color:#555;letter-spacing:-0.041px;">URL inaccessible du...</span>
<div style="position:absolute;left:645.8px;top:377.8px;width:30.4px;height:30.4px;background:#f8f8f8;border-radius:15.2px;"></div>
<svg style="position:absolute;left:654px;top:387px;" width="13" height="12" viewBox="0 0 13 12" fill="none"><g transform="translate(0.6 0)"><clipPath id="fc_gb"><circle cx="6" cy="6" r="5.600"/></clipPath><g clip-path="url(#fc_gb)"><rect width="12" height="12" fill="#10267f"/><path d="M0 0 L12 12 M12 0 L0 12" stroke="#fff" stroke-width="2"/><path d="M0 0 L12 12 M12 0 L0 12" stroke="#e0243a" stroke-width="0.800"/><path d="M6 0 V12 M0 6 H12" stroke="#fff" stroke-width="3.400"/><path d="M6 0 V12 M0 6 H12" stroke="#e0243a" stroke-width="1.900"/></g></g></svg>
<span class="t" style="left:681.5px;top:381.8px;font-size:8.2px;line-height:11px;color:#222;letter-spacing:0.040px;-webkit-text-stroke:0.15px #222;">Returning visitor</span>
<span class="t" style="left:681.5px;top:393.1px;font-size:8.2px;line-height:11px;color:#555;letter-spacing:0.056px;">United Kingdom</span>
<div style="position:absolute;left:777.1px;top:377.8px;width:30.4px;height:30.4px;background:#f8f8f8;border-radius:15.2px;"></div>
<svg style="position:absolute;left:784px;top:385px;" width="17" height="16" viewBox="0 0 17 16" fill="none"><g transform="translate(0.4 0)"><circle cx="8" cy="8" r="6.500" stroke="#111" stroke-width="1.350" stroke-dasharray="2.350 1.053" stroke-dashoffset="1.175"/></g></svg>
<span class="t" style="left:813px;top:381.8px;font-size:8.2px;line-height:11px;color:#555;letter-spacing:-0.015px;">Direct Page View of</span>
<span class="t" style="left:813px;top:393.1px;font-size:8.2px;line-height:11px;color:#555;letter-spacing:-0.036px;">Recording's Entry Page</span>
<div style="position:absolute;left:937.6px;top:378.1px;width:30.4px;height:30.4px;background:#f8f8f8;border-radius:15.2px;"></div>
<div style="position:absolute;left:973.3px;top:378.1px;width:30.4px;height:30.4px;background:#f8f8f8;border-radius:15.2px;"></div>
<div style="position:absolute;left:1009.1px;top:378.1px;width:30.4px;height:30.4px;background:#f8f8f8;border-radius:15.2px;"></div>
<svg style="position:absolute;left:945px;top:387px;" width="16" height="14" viewBox="0 0 16 14" fill="none"><rect x="1.500" y="1.500" width="13" height="8" rx="2.200" stroke="#444" stroke-width="1"/><path d="M4.200 11.500 H11.800" stroke="#555" stroke-width="1" stroke-linecap="round"/></svg>
<svg style="position:absolute;left:982px;top:386px;" width="13" height="15" viewBox="0 0 13 15" fill="none"><g transform="translate(0.5 0.3)"><path d="M6 0.400 C4.900 0.400 4.200 1.200 4.200 2.300 C4.200 3.600 3.900 4.600 3.200 5.900 C2.500 7.200 2 8.600 2.100 10 L4.700 12.200 H7.300 L9.900 10 C10 8.600 9.500 7.200 8.800 5.900 C8.100 4.600 7.800 3.600 7.800 2.300 C7.800 1.200 7.100 0.400 6 0.400 Z" fill="#111"/><path d="M5.500 3.300 C4.500 4.700 3.100 7.500 2.900 9.700 L5 11.600 H7 L8.100 10.300 C8.400 8 7.500 5.200 6.500 3.300 Z" fill="#fff"/><path d="M0.500 11.600 L2.600 9.700 L4.700 12.300 C4.200 13.500 2.400 13.500 0.700 12.500 Z" fill="#fff" stroke="#111" stroke-width="0.550" stroke-linejoin="round"/><path d="M11.500 11.600 L9.400 9.700 L7.300 12.300 C7.800 13.500 9.600 13.500 11.300 12.500 Z" fill="#fff" stroke="#111" stroke-width="0.550" stroke-linejoin="round"/></g></svg>
<svg style="position:absolute;left:1017px;top:386px;" width="15" height="15" viewBox="0 0 15 15" fill="none"><g transform="translate(0.4 0.2)"><circle cx="7" cy="7" r="6.700" fill="#fff"/><path d="M7 7 L1.200 3.650 A6.700 6.700 0 0 1 12.800 3.650 Z" fill="#ea4335"/><path d="M7 7 L12.800 3.650 A6.700 6.700 0 0 1 7 13.700 Z" fill="#fbbc04"/><path d="M7 7 L7 13.700 A6.700 6.700 0 0 1 1.200 3.650 Z" fill="#34a853"/><path d="M7 3.650 H12.800 A6.700 6.700 0 0 0 1.200 3.650 L4.100 8.680 Z" fill="#ea4335"/><path d="M9.900 8.680 L12.800 3.650 H7 Z" fill="#fbbc04"/><path d="M9.900 8.680 L7 13.700 A6.700 6.700 0 0 0 12.800 3.650 Z" fill="#fbbc04"/><path d="M4.100 8.680 L1.200 3.650 A6.700 6.700 0 0 0 7 13.700 L9.900 8.680 Z" fill="#34a853"/><circle cx="7" cy="7" r="3.300" fill="#fff"/><circle cx="7" cy="7" r="2.400" fill="#4285f4"/></g></svg>
<div style="position:absolute;left:1080px;top:377.8px;width:30.7px;height:31px;background:#5a00b4;border-radius:7px;"></div>
<svg style="position:absolute;left:1087px;top:385px;" width="17" height="17" viewBox="0 0 17 17" fill="none"><g transform="translate(0.9 0.3)"><circle cx="8" cy="8" r="6.900" stroke="#fff" stroke-width="1.1"/><path d="M6.300 5 L11 8 L6.300 11 Z" fill="#fff"/></g></svg>
<div style="position:absolute;left:1116px;top:377.8px;width:30.7px;height:31px;background:#f8f8f8;border-radius:7px;"></div>
<svg style="position:absolute;left:1123px;top:385px;" width="17" height="17" viewBox="0 0 17 17" fill="none"><g transform="translate(0.5 0.3)"><circle cx="8" cy="8" r="7.200" stroke="#222" stroke-width="1"/><circle cx="5.200" cy="8" r="0.800" fill="#222"/><circle cx="8" cy="8" r="0.800" fill="#222"/><circle cx="10.800" cy="8" r="0.800" fill="#222"/></g></svg>
</div>
<div>
<div style="position:absolute;left:89.3px;top:425.8px;width:30.4px;height:30.4px;background:#f8f8f8;border-radius:15.2px;"></div>
<svg style="position:absolute;left:97px;top:436px;" width="15" height="11" viewBox="0 0 15 11" fill="none"><g transform="translate(0.7 0.7)"><rect x="0.750" y="0.750" width="8.500" height="7.800" rx="2" stroke="#5a00b4" stroke-width="1.150"/><path d="M9.700 3.500 L11.500 1.900 C12.300 1.300 13 1.700 13 2.600 V6.700 C13 7.600 12.300 8 11.500 7.400 L9.700 5.800" stroke="#5a00b4" stroke-width="1.150" stroke-linejoin="round"/></g></svg>
<span class="t" style="left:125px;top:429.6px;font-size:8.2px;line-height:11px;color:#222;letter-spacing:0.060px;-webkit-text-stroke:0.15px #222;">2B708C8B-9743-4B71-8C9...</span>
<span class="t" style="left:125px;top:441px;font-size:8.2px;line-height:11px;color:#5c5c5c;letter-spacing:0.123px;">12/30/2025, 3:48 AM</span>
<span class="t" style="left:292.5px;top:434.6px;font-size:10.2px;line-height:14px;color:#222;letter-spacing:-0.400px;">01:27</span>
<svg style="position:absolute;left:396px;top:434px;" width="15" height="14" viewBox="0 0 15 14" fill="none"><g transform="translate(0.5 0)"><path d="M12.300 5.800 V2.700 C12.300 1.800 11.800 1.300 10.900 1.300 H8.300 C7.700 1.300 7.300 1.500 6.900 1.900 L1.500 7.300 C0.900 7.900 0.900 8.700 1.500 9.300 L4.500 12.300 C5.100 12.900 5.900 12.900 6.500 12.300 L7.300 11.500" stroke="#5a00b4" stroke-width="1.100" stroke-linecap="round" stroke-linejoin="round"/><circle cx="9.500" cy="4.300" r="0.800" fill="#5a00b4"/><path d="M7.300 7.800 L12 12.500 M12.300 9.400 V12.800 H8.900" stroke="#5a00b4" stroke-width="1.050" stroke-linecap="round" stroke-linejoin="round"/></g></svg>
<span class="t" style="left:417.4px;top:434.9px;font-size:10px;line-height:14px;color:#5a00b4;">0</span>
<svg style="position:absolute;left:484px;top:434px;" width="15" height="15" viewBox="0 0 15 15" fill="none"><g transform="translate(0.7 0.7)"><path d="M7.100 1.100 L13 3.600 L7.100 6.100 L1.200 3.600 Z" stroke="#5a00b4" stroke-width="1.100" stroke-linejoin="round"/><path d="M1.200 6.900 L7.100 9.500 L13 6.900 M1.200 9.900 L7.100 12.500 L13 9.900" stroke="#5a00b4" stroke-width="1.100" stroke-linecap="round" stroke-linejoin="round"/></g></svg>
<span class="t" style="left:506.4px;top:434.9px;font-size:10px;line-height:14px;color:#5a00b4;">3</span>
<svg style="position:absolute;left:529px;top:425px;" width="16" height="13" viewBox="0 0 16 13" fill="none"><g transform="translate(0.7 0.5)"><path d="M0.200 6 H5.800 M3.300 3.500 L5.900 6 L3.300 8.500" stroke="#333" stroke-width="0.900" stroke-linecap="round" stroke-linejoin="round"/><path d="M9.800 0.300 L6.300 2.900 V9.100 L9.800 11.700" stroke="#333" stroke-width="0.900" stroke-linejoin="round" stroke-linecap="round"/><path d="M8.500 1.600 V10.400" stroke="#333" stroke-width="0.900"/><path d="M9 1 H11.600 C13.300 1 14.100 1.900 14.100 3.500 V8.500 C14.100 10.100 13.300 11 11.600 11 H9" stroke="#333" stroke-width="0.900"/><circle cx="10.500" cy="6" r="0.600" fill="#333"/></g></svg>
<svg style="position:absolute;left:529px;top:445px;" width="16" height="13" viewBox="0 0 16 13" fill="none"><g transform="translate(0.4 0.5)"><path d="M8.800 6 H13.900 M11.400 3.500 L14 6 L11.400 8.500" stroke="#333" stroke-width="0.900" stroke-linecap="round" stroke-linejoin="round"/><path d="M6 1 H3.300 C1.600 1 0.800 1.900 0.800 3.500 V8.500 C0.800 10.100 1.600 11 3.300 11 H6" stroke="#333" stroke-width="0.900"/><path d="M6.800 1.600 V10.400" stroke="#333" stroke-width="0.900"/><path d="M5.300 0.300 L8.700 2.900 V4.300 M8.700 7.700 V9.100 L5.300 11.700" stroke="#333" stroke-width="0.900" stroke-linejoin="round" stroke-linecap="round"/><circle cx="4.400" cy="6" r="0.600" fill="#333"/></g></svg>
<span class="t" style="left:549.7px;top:425.8px;font-size:8.2px;line-height:11px;color:#555;letter-spacing:-0.041px;">URL inaccessible du...</span>
<span class="t" style="left:549.7px;top:445.5px;font-size:8.2px;line-height:11px;color:#555;letter-spacing:-0.041px;">URL inaccessible du...</span>
<div style="position:absolute;left:645.8px;top:425.8px;width:30.4px;height:30.4px;background:#f8f8f8;border-radius:15.2px;"></div>
<svg style="position:absolute;left:654px;top:435px;" width="13" height="12" viewBox="0 0 13 12" fill="none"><g transform="translate(0.6 0)"><clipPath id="fc_fr"><circle cx="6" cy="6" r="5.600"/></clipPath><g clip-path="url(#fc_fr)"><rect width="4.200" height="12" fill="#1b2f9c"/><rect x="4.200" width="3.600" height="12" fill="#fff"/><rect x="7.800" width="4.200" height="12" fill="#ee2436"/></g></g></svg>
<span class="t" style="left:681.5px;top:429.8px;font-size:8.2px;line-height:11px;color:#222;letter-spacing:0.040px;-webkit-text-stroke:0.15px #222;">Returning visitor</span>
<span class="t" style="left:681.5px;top:441.1px;font-size:8.2px;line-height:11px;color:#555;letter-spacing:-0.097px;">France</span>
<div style="position:absolute;left:777.1px;top:425.8px;width:30.4px;height:30.4px;background:#f8f8f8;border-radius:15.2px;"></div>
<svg style="position:absolute;left:784px;top:433px;" width="17" height="16" viewBox="0 0 17 16" fill="none"><g transform="translate(0.4 0)"><circle cx="8" cy="8" r="6.500" stroke="#111" stroke-width="1.350" stroke-dasharray="2.350 1.053" stroke-dashoffset="1.175"/></g></svg>
<span class="t" style="left:813px;top:429.8px;font-size:8.2px;line-height:11px;color:#555;letter-spacing:-0.015px;">Direct Page View of</span>
<span class="t" style="left:813px;top:441.1px;font-size:8.2px;line-height:11px;color:#555;letter-spacing:-0.036px;">Recording's Entry Page</span>
<div style="position:absolute;left:937.6px;top:426.1px;width:30.4px;height:30.4px;background:#f8f8f8;border-radius:15.2px;"></div>
<div style="position:absolute;left:973.3px;top:426.1px;width:30.4px;height:30.4px;background:#f8f8f8;border-radius:15.2px;"></div>
<div style="position:absolute;left:1009.1px;top:426.1px;width:30.4px;height:30.4px;background:#f8f8f8;border-radius:15.2px;"></div>
<svg style="position:absolute;left:945px;top:435px;" width="16" height="14" viewBox="0 0 16 14" fill="none"><rect x="1.500" y="1.500" width="13" height="8" rx="2.200" stroke="#444" stroke-width="1"/><path d="M4.200 11.500 H11.800" stroke="#555" stroke-width="1" stroke-linecap="round"/></svg>
<svg style="position:absolute;left:982px;top:434px;" width="13" height="14" viewBox="0 0 13 14" fill="none"><g transform="translate(0 0.8)"><rect x="0" y="0" width="6.200" height="6.200" fill="#f25022"/><rect x="6.800" y="0" width="6.200" height="6.200" fill="#7fba00"/><rect x="0" y="6.800" width="6.200" height="6.200" fill="#00a4ef"/><rect x="6.800" y="6.800" width="6.200" height="6.200" fill="#ffb900"/></g></svg>
<svg style="position:absolute;left:1017px;top:434px;" width="15" height="15" viewBox="0 0 15 15" fill="none"><g transform="translate(0.4 0.2)"><circle cx="7" cy="7" r="6.700" fill="#fff"/><path d="M7 7 L1.200 3.650 A6.700 6.700 0 0 1 12.800 3.650 Z" fill="#ea4335"/><path d="M7 7 L12.800 3.650 A6.700 6.700 0 0 1 7 13.700 Z" fill="#fbbc04"/><path d="M7 7 L7 13.700 A6.700 6.700 0 0 1 1.200 3.650 Z" fill="#34a853"/><path d="M7 3.650 H12.800 A6.700 6.700 0 0 0 1.200 3.650 L4.100 8.680 Z" fill="#ea4335"/><path d="M9.900 8.680 L12.800 3.650 H7 Z" fill="#fbbc04"/><path d="M9.900 8.680 L7 13.700 A6.700 6.700 0 0 0 12.800 3.650 Z" fill="#fbbc04"/><path d="M4.100 8.680 L1.200 3.650 A6.700 6.700 0 0 0 7 13.700 L9.900 8.680 Z" fill="#34a853"/><circle cx="7" cy="7" r="3.300" fill="#fff"/><circle cx="7" cy="7" r="2.400" fill="#4285f4"/></g></svg>
<div style="position:absolute;left:1080px;top:425.8px;width:30.7px;height:31px;background:#5a00b4;border-radius:7px;"></div>
<svg style="position:absolute;left:1087px;top:433px;" width="17" height="17" viewBox="0 0 17 17" fill="none"><g transform="translate(0.9 0.3)"><circle cx="8" cy="8" r="6.900" stroke="#fff" stroke-width="1.1"/><path d="M6.300 5 L11 8 L6.300 11 Z" fill="#fff"/></g></svg>
<div style="position:absolute;left:1116px;top:425.8px;width:30.7px;height:31px;background:#f8f8f8;border-radius:7px;"></div>
<svg style="position:absolute;left:1123px;top:433px;" width="17" height="17" viewBox="0 0 17 17" fill="none"><g transform="translate(0.5 0.3)"><circle cx="8" cy="8" r="7.200" stroke="#222" stroke-width="1"/><circle cx="5.200" cy="8" r="0.800" fill="#222"/><circle cx="8" cy="8" r="0.800" fill="#222"/><circle cx="10.800" cy="8" r="0.800" fill="#222"/></g></svg>
</div>
<div>
<div style="position:absolute;left:89.3px;top:473.8px;width:30.4px;height:30.4px;background:#f8f8f8;border-radius:15.2px;"></div>
<svg style="position:absolute;left:97px;top:484px;" width="15" height="11" viewBox="0 0 15 11" fill="none"><g transform="translate(0.7 0.7)"><rect x="0.750" y="0.750" width="8.500" height="7.800" rx="2" stroke="#5a00b4" stroke-width="1.150"/><path d="M9.700 3.500 L11.500 1.900 C12.300 1.300 13 1.700 13 2.600 V6.700 C13 7.600 12.300 8 11.500 7.400 L9.700 5.800" stroke="#5a00b4" stroke-width="1.150" stroke-linejoin="round"/></g></svg>
<span class="t" style="left:125px;top:477.6px;font-size:8.2px;line-height:11px;color:#222;letter-spacing:-0.109px;-webkit-text-stroke:0.15px #222;">E69F2DBB-72CF-4C19-A51...</span>
<span class="t" style="left:125px;top:489px;font-size:8.2px;line-height:11px;color:#5c5c5c;letter-spacing:0.123px;">12/30/2025, 3:40 AM</span>
<span class="t" style="left:291.9px;top:482.6px;font-size:10.2px;line-height:14px;color:#222;letter-spacing:0.175px;">00:42</span>
<svg style="position:absolute;left:396px;top:482px;" width="15" height="14" viewBox="0 0 15 14" fill="none"><g transform="translate(0.5 0)"><path d="M12.300 5.800 V2.700 C12.300 1.800 11.800 1.300 10.900 1.300 H8.300 C7.700 1.300 7.300 1.500 6.900 1.900 L1.500 7.300 C0.900 7.900 0.900 8.700 1.500 9.300 L4.500 12.300 C5.100 12.900 5.900 12.900 6.500 12.300 L7.300 11.500" stroke="#5a00b4" stroke-width="1.100" stroke-linecap="round" stroke-linejoin="round"/><circle cx="9.500" cy="4.300" r="0.800" fill="#5a00b4"/><path d="M7.300 7.800 L12 12.500 M12.300 9.400 V12.800 H8.900" stroke="#5a00b4" stroke-width="1.050" stroke-linecap="round" stroke-linejoin="round"/></g></svg>
<span class="t" style="left:417.4px;top:482.9px;font-size:10px;line-height:14px;color:#5a00b4;">1</span>
<svg style="position:absolute;left:484px;top:482px;" width="15" height="15" viewBox="0 0 15 15" fill="none"><g transform="translate(0.7 0.7)"><path d="M7.100 1.100 L13 3.600 L7.100 6.100 L1.200 3.600 Z" stroke="#5a00b4" stroke-width="1.100" stroke-linejoin="round"/><path d="M1.200 6.900 L7.100 9.500 L13 6.900 M1.200 9.900 L7.100 12.500 L13 9.900" stroke="#5a00b4" stroke-width="1.100" stroke-linecap="round" stroke-linejoin="round"/></g></svg>
<span class="t" style="left:506.4px;top:482.9px;font-size:10px;line-height:14px;color:#5a00b4;">1</span>
<svg style="position:absolute;left:528px;top:473px;" width="15" height="13" viewBox="0 0 15 13" fill="none"><g transform="translate(0 0.5)"><path d="M0.200 6 H5.800 M3.300 3.500 L5.900 6 L3.300 8.500" stroke="#333" stroke-width="0.900" stroke-linecap="round" stroke-linejoin="round"/><path d="M9.800 0.300 L6.300 2.900 V9.100 L9.800 11.700" stroke="#333" stroke-width="0.900" stroke-linejoin="round" stroke-linecap="round"/><path d="M8.500 1.600 V10.400" stroke="#333" stroke-width="0.900"/><path d="M9 1 H11.600 C13.300 1 14.100 1.900 14.100 3.500 V8.500 C14.100 10.100 13.300 11 11.600 11 H9" stroke="#333" stroke-width="0.900"/><circle cx="10.500" cy="6" r="0.600" fill="#333"/></g></svg>
<svg style="position:absolute;left:527px;top:493px;" width="16" height="13" viewBox="0 0 16 13" fill="none"><g transform="translate(0.7 0.5)"><path d="M8.800 6 H13.900 M11.400 3.500 L14 6 L11.400 8.500" stroke="#333" stroke-width="0.900" stroke-linecap="round" stroke-linejoin="round"/><path d="M6 1 H3.300 C1.600 1 0.800 1.900 0.800 3.500 V8.500 C0.800 10.100 1.600 11 3.300 11 H6" stroke="#333" stroke-width="0.900"/><path d="M6.800 1.600 V10.400" stroke="#333" stroke-width="0.900"/><path d="M5.300 0.300 L8.700 2.900 V4.300 M8.700 7.700 V9.100 L5.300 11.700" stroke="#333" stroke-width="0.900" stroke-linejoin="round" stroke-linecap="round"/><circle cx="4.400" cy="6" r="0.600" fill="#333"/></g></svg>
<span class="t" style="left:548px;top:473.8px;font-size:8.2px;line-height:11px;color:#555;letter-spacing:-0.041px;">URL inaccessible du...</span>
<span class="t" style="left:548px;top:493.5px;font-size:8.2px;line-height:11px;color:#555;letter-spacing:-0.041px;">URL inaccessible du...</span>
<div style="position:absolute;left:645.8px;top:473.8px;width:30.4px;height:30.4px;background:#f8f8f8;border-radius:15.2px;"></div>
<svg style="position:absolute;left:654px;top:483px;" width="13" height="12" viewBox="0 0 13 12" fill="none"><g transform="translate(0.6 0)"><clipPath id="fc_us"><circle cx="6" cy="6" r="5.600"/></clipPath><g clip-path="url(#fc_us)"><rect width="12" height="12" fill="#fff"/><path d="M0 1.500 H12 M0 3.300 H12 M0 5.100 H12 M0 7.300 H12 M0 9.100 H12 M0 10.800 H12" stroke="#d23a44" stroke-width="0.900"/><rect width="9.200" height="6.300" fill="#2c2f6b"/><path d="M1.500 2 H7.500 M1.500 3.400 H7.500 M1.500 4.800 H7.500" stroke="#8f93bd" stroke-width="0.500" stroke-dasharray="0.600 0.900"/></g></g></svg>
<span class="t" style="left:681.5px;top:477.8px;font-size:8.2px;line-height:11px;color:#222;letter-spacing:0.045px;-webkit-text-stroke:0.15px #222;">New visitor</span>
<span class="t" style="left:681.5px;top:489.1px;font-size:8.2px;line-height:11px;color:#555;letter-spacing:0.012px;">United States</span>
<div style="position:absolute;left:777.1px;top:473.8px;width:30.4px;height:30.4px;background:#f8f8f8;border-radius:15.2px;"></div>
<svg style="position:absolute;left:784px;top:480px;" width="17" height="17" viewBox="0 0 17 17" fill="none"><g transform="translate(0.4 0.6)"><circle cx="8" cy="8" r="7" fill="#fff" stroke="#de5833" stroke-width="1"/><circle cx="8" cy="8" r="5.400" fill="#de5833"/><path d="M6.500 4.300 C8.300 3.700 10 4.900 10 6.800 C10 8.600 9.500 10 9.800 12.700 L7.400 13.200 C7 11 5.700 9.200 5.700 7 C5.700 5.800 5.900 4.900 6.500 4.300 Z" fill="#fff"/><path d="M8.700 7.500 C10 7.300 11.300 7.500 11.900 8 C11.100 8.700 9.800 8.900 8.700 8.700 Z" fill="#fdd20a"/><path d="M8.800 9.100 C9.800 9 10.800 9.100 11.300 9.400 C10.600 9.900 9.600 10 8.800 9.900 Z" fill="#f0a020"/><path d="M7.500 10.700 C8.500 10.300 9.800 10.400 10.500 10.900 C9.900 11.900 8.600 12.100 7.800 11.900 Z" fill="#4cba3c"/><circle cx="7.300" cy="6.700" r="0.550" fill="#3a62c4"/><circle cx="9.300" cy="6.500" r="0.450" fill="#3a62c4"/></g></svg>
<span class="t" style="left:813px;top:483.6px;font-size:8.2px;line-height:11px;color:#555;letter-spacing:0.127px;">duckduckgo.com/</span>
<div style="position:absolute;left:937.6px;top:474.1px;width:30.4px;height:30.4px;background:#f8f8f8;border-radius:15.2px;"></div>
<div style="position:absolute;left:973.3px;top:474.1px;width:30.4px;height:30.4px;background:#f8f8f8;border-radius:15.2px;"></div>
<div style="position:absolute;left:1009.1px;top:474.1px;width:30.4px;height:30.4px;background:#f8f8f8;border-radius:15.2px;"></div>
<svg style="position:absolute;left:944px;top:482px;" width="17" height="14" viewBox="0 0 17 14" fill="none"><g transform="translate(0.7 0)"><rect x="3.900" y="0.500" width="8.200" height="13" rx="2" fill="#fff" stroke="#444" stroke-width="1"/><path d="M6 0.800 H10 V1.500 C10 2.200 9.600 2.500 9 2.500 H7 C6.400 2.500 6 2.200 6 1.500 Z" fill="#555"/><circle cx="8" cy="10.800" r="0.600" fill="#555"/></g></svg>
<svg style="position:absolute;left:982px;top:482px;" width="13" height="14" viewBox="0 0 13 14" fill="none"><g transform="translate(0 0.8)"><path d="M0.600 9.400 C0.800 6.100 3.400 3.700 6.500 3.700 C9.600 3.700 12.200 6.100 12.400 9.400 Z" fill="#3ddc84"/><path d="M3.200 4.700 L1.900 2.500 M9.800 4.700 L11.100 2.500" stroke="#3ddc84" stroke-width="0.800" stroke-linecap="round"/><circle cx="3.900" cy="7.100" r="0.600" fill="#fff"/><circle cx="9.100" cy="7.100" r="0.600" fill="#fff"/></g></svg>
<svg style="position:absolute;left:1017px;top:482px;" width="15" height="15" viewBox="0 0 15 15" fill="none"><g transform="translate(0.4 0.2)"><circle cx="7" cy="7" r="6.700" fill="#fff"/><path d="M7 7 L1.200 3.650 A6.700 6.700 0 0 1 12.800 3.650 Z" fill="#ea4335"/><path d="M7 7 L12.800 3.650 A6.700 6.700 0 0 1 7 13.700 Z" fill="#fbbc04"/><path d="M7 7 L7 13.700 A6.700 6.700 0 0 1 1.200 3.650 Z" fill="#34a853"/><path d="M7 3.650 H12.800 A6.700 6.700 0 0 0 1.200 3.650 L4.100 8.680 Z" fill="#ea4335"/><path d="M9.900 8.680 L12.800 3.650 H7 Z" fill="#fbbc04"/><path d="M9.900 8.680 L7 13.700 A6.700 6.700 0 0 0 12.800 3.650 Z" fill="#fbbc04"/><path d="M4.100 8.680 L1.200 3.650 A6.700 6.700 0 0 0 7 13.700 L9.900 8.680 Z" fill="#34a853"/><circle cx="7" cy="7" r="3.300" fill="#fff"/><circle cx="7" cy="7" r="2.400" fill="#4285f4"/></g></svg>
<div style="position:absolute;left:1080px;top:473.8px;width:30.7px;height:31px;background:#5a00b4;border-radius:7px;"></div>
<svg style="position:absolute;left:1087px;top:481px;" width="17" height="17" viewBox="0 0 17 17" fill="none"><g transform="translate(0.9 0.3)"><circle cx="8" cy="8" r="6.900" stroke="#fff" stroke-width="1.1"/><path d="M6.300 5 L11 8 L6.300 11 Z" fill="#fff"/></g></svg>
<div style="position:absolute;left:1116px;top:473.8px;width:30.7px;height:31px;background:#f8f8f8;border-radius:7px;"></div>
<svg style="position:absolute;left:1123px;top:481px;" width="17" height="17" viewBox="0 0 17 17" fill="none"><g transform="translate(0.5 0.3)"><circle cx="8" cy="8" r="7.200" stroke="#222" stroke-width="1"/><circle cx="5.200" cy="8" r="0.800" fill="#222"/><circle cx="8" cy="8" r="0.800" fill="#222"/><circle cx="10.800" cy="8" r="0.800" fill="#222"/></g></svg>
</div>
<div>
<div style="position:absolute;left:89.3px;top:521.8px;width:30.4px;height:30.4px;background:#f8f8f8;border-radius:15.2px;"></div>
<svg style="position:absolute;left:97px;top:532px;" width="15" height="11" viewBox="0 0 15 11" fill="none"><g transform="translate(0.7 0.7)"><rect x="0.750" y="0.750" width="8.500" height="7.800" rx="2" stroke="#5a00b4" stroke-width="1.150"/><path d="M9.700 3.500 L11.500 1.900 C12.300 1.300 13 1.700 13 2.600 V6.700 C13 7.600 12.300 8 11.500 7.400 L9.700 5.800" stroke="#5a00b4" stroke-width="1.150" stroke-linejoin="round"/></g></svg>
<span class="t" style="left:125px;top:525.6px;font-size:8.2px;line-height:11px;color:#222;letter-spacing:0.093px;-webkit-text-stroke:0.15px #222;">464BB5F4-223D-49BF-B9...</span>
<span class="t" style="left:125px;top:537px;font-size:8.2px;line-height:11px;color:#5c5c5c;letter-spacing:0.123px;">12/30/2025, 3:36 AM</span>
<span class="t" style="left:291.9px;top:530.6px;font-size:10.2px;line-height:14px;color:#222;letter-spacing:0.075px;">00:22</span>
<svg style="position:absolute;left:396px;top:530px;" width="15" height="14" viewBox="0 0 15 14" fill="none"><g transform="translate(0.5 0)"><path d="M12.300 5.800 V2.700 C12.300 1.800 11.800 1.300 10.900 1.300 H8.300 C7.700 1.300 7.300 1.500 6.900 1.900 L1.500 7.300 C0.900 7.900 0.900 8.700 1.500 9.300 L4.500 12.300 C5.100 12.900 5.900 12.900 6.500 12.300 L7.300 11.500" stroke="#5a00b4" stroke-width="1.100" stroke-linecap="round" stroke-linejoin="round"/><circle cx="9.500" cy="4.300" r="0.800" fill="#5a00b4"/><path d="M7.300 7.800 L12 12.500 M12.300 9.400 V12.800 H8.900" stroke="#5a00b4" stroke-width="1.050" stroke-linecap="round" stroke-linejoin="round"/></g></svg>
<span class="t" style="left:417.4px;top:530.9px;font-size:10px;line-height:14px;color:#5a00b4;">1</span>
<svg style="position:absolute;left:484px;top:530px;" width="15" height="15" viewBox="0 0 15 15" fill="none"><g transform="translate(0.7 0.7)"><path d="M7.100 1.100 L13 3.600 L7.100 6.100 L1.200 3.600 Z" stroke="#5a00b4" stroke-width="1.100" stroke-linejoin="round"/><path d="M1.200 6.900 L7.100 9.500 L13 6.900 M1.200 9.900 L7.100 12.500 L13 9.900" stroke="#5a00b4" stroke-width="1.100" stroke-linecap="round" stroke-linejoin="round"/></g></svg>
<span class="t" style="left:506.4px;top:530.9px;font-size:10px;line-height:14px;color:#5a00b4;">3</span>
<svg style="position:absolute;left:529px;top:521px;" width="16" height="13" viewBox="0 0 16 13" fill="none"><g transform="translate(0.7 0.5)"><path d="M0.200 6 H5.800 M3.300 3.500 L5.900 6 L3.300 8.500" stroke="#333" stroke-width="0.900" stroke-linecap="round" stroke-linejoin="round"/><path d="M9.800 0.300 L6.300 2.900 V9.100 L9.800 11.700" stroke="#333" stroke-width="0.900" stroke-linejoin="round" stroke-linecap="round"/><path d="M8.500 1.600 V10.400" stroke="#333" stroke-width="0.900"/><path d="M9 1 H11.600 C13.300 1 14.100 1.900 14.100 3.500 V8.500 C14.100 10.100 13.300 11 11.600 11 H9" stroke="#333" stroke-width="0.900"/><circle cx="10.500" cy="6" r="0.600" fill="#333"/></g></svg>
<svg style="position:absolute;left:529px;top:541px;" width="16" height="13" viewBox="0 0 16 13" fill="none"><g transform="translate(0.4 0.5)"><path d="M8.800 6 H13.900 M11.400 3.500 L14 6 L11.400 8.500" stroke="#333" stroke-width="0.900" stroke-linecap="round" stroke-linejoin="round"/><path d="M6 1 H3.300 C1.600 1 0.800 1.900 0.800 3.500 V8.500 C0.800 10.100 1.600 11 3.300 11 H6" stroke="#333" stroke-width="0.900"/><path d="M6.800 1.600 V10.400" stroke="#333" stroke-width="0.900"/><path d="M5.300 0.300 L8.700 2.900 V4.300 M8.700 7.700 V9.100 L5.300 11.700" stroke="#333" stroke-width="0.900" stroke-linejoin="round" stroke-linecap="round"/><circle cx="4.400" cy="6" r="0.600" fill="#333"/></g></svg>
<span class="t" style="left:549.7px;top:521.8px;font-size:8.2px;line-height:11px;color:#555;letter-spacing:-0.041px;">URL inaccessible du...</span>
<span class="t" style="left:549.7px;top:541.5px;font-size:8.2px;line-height:11px;color:#555;letter-spacing:-0.041px;">URL inaccessible du...</span>
<div style="position:absolute;left:645.8px;top:521.8px;width:30.4px;height:30.4px;background:#f8f8f8;border-radius:15.2px;"></div>
<svg style="position:absolute;left:654px;top:531px;" width="13" height="12" viewBox="0 0 13 12" fill="none"><g transform="translate(0.6 0)"><clipPath id="fc_pl"><circle cx="6" cy="6" r="5.600"/></clipPath><g clip-path="url(#fc_pl)"><rect width="12" height="6" fill="#fff"/><rect y="6" width="12" height="6" fill="#e21a3c"/></g></g></svg>
<span class="t" style="left:681.5px;top:525.8px;font-size:8.2px;line-height:11px;color:#222;letter-spacing:0.040px;-webkit-text-stroke:0.15px #222;">Returning visitor</span>
<span class="t" style="left:681.5px;top:537.1px;font-size:8.2px;line-height:11px;color:#555;letter-spacing:-0.160px;">Poland</span>
<div style="position:absolute;left:777.1px;top:521.8px;width:30.4px;height:30.4px;background:#f8f8f8;border-radius:15.2px;"></div>
<svg style="position:absolute;left:787px;top:530px;" width="11" height="13" viewBox="0 0 11 13" fill="none"><g transform="translate(0 0.8) scale(0.875 0.8788)"><path d="M11.800 6.100 H6.100 V8.400 H9.400 C9.100 9.900 7.800 10.800 6.100 10.800 C4.100 10.800 2.500 9.200 2.500 7.200 C2.500 5.200 4.100 3.600 6.100 3.600 C7 3.600 7.800 3.900 8.400 4.500 L10.100 2.800 C9 1.800 7.700 1.200 6.100 1.200 C2.800 1.200 0.100 3.900 0.100 7.200 C0.100 10.500 2.800 13.200 6.100 13.200 C9.600 13.200 11.900 10.800 11.900 7.300 C11.900 6.900 11.900 6.500 11.800 6.100 Z" fill="#4285f4"/><path d="M0.750 4.500 L2.700 6 C3.200 4.600 4.500 3.600 6.100 3.600 C7 3.600 7.800 3.900 8.400 4.500 L10.100 2.800 C9 1.800 7.700 1.200 6.100 1.200 C3.800 1.200 1.750 2.500 0.750 4.500 Z" fill="#ea4335"/><path d="M0.750 4.500 C0.350 5.300 0.100 6.200 0.100 7.200 C0.100 8.200 0.350 9.100 0.750 9.900 L2.700 8.400 C2.600 8 2.500 7.600 2.500 7.200 C2.500 6.800 2.600 6.400 2.700 6 Z" fill="#fbbc05"/><path d="M6.100 13.200 C7.700 13.200 9 12.700 10 11.800 L8.100 10.300 C7.600 10.600 6.900 10.800 6.100 10.800 C4.500 10.800 3.200 9.800 2.700 8.400 L0.750 9.900 C1.750 11.900 3.800 13.200 6.100 13.200 Z" fill="#34a853"/></g></svg>
<span class="t" style="left:813px;top:531.6px;font-size:8.2px;line-height:11px;color:#555;letter-spacing:0.109px;">google.com/</span>
<div style="position:absolute;left:937.6px;top:522.1px;width:30.4px;height:30.4px;background:#f8f8f8;border-radius:15.2px;"></div>
<div style="position:absolute;left:973.3px;top:522.1px;width:30.4px;height:30.4px;background:#f8f8f8;border-radius:15.2px;"></div>
<div style="position:absolute;left:1009.1px;top:522.1px;width:30.4px;height:30.4px;background:#f8f8f8;border-radius:15.2px;"></div>
<svg style="position:absolute;left:945px;top:531px;" width="16" height="14" viewBox="0 0 16 14" fill="none"><rect x="1.500" y="1.500" width="13" height="8" rx="2.200" stroke="#444" stroke-width="1"/><path d="M4.200 11.500 H11.800" stroke="#555" stroke-width="1" stroke-linecap="round"/></svg>
<svg style="position:absolute;left:982px;top:530px;" width="13" height="15" viewBox="0 0 13 15" fill="none"><g transform="translate(0.5 0.3)"><path d="M9.200 7.400 C9.200 5.800 10.500 5.100 10.600 5 C9.800 3.900 8.700 3.800 8.300 3.700 C7.300 3.600 6.400 4.300 5.900 4.300 C5.400 4.300 4.600 3.700 3.800 3.800 C2.700 3.800 1.700 4.400 1.200 5.400 C0 7.400 0.900 10.400 2 12 C2.600 12.800 3.200 13.700 4.100 13.600 C5 13.600 5.300 13.100 6.300 13.100 C7.300 13.100 7.600 13.600 8.500 13.600 C9.400 13.600 10 12.800 10.500 12 C11.200 11.100 11.400 10.200 11.400 10.100 C11.400 10.100 9.200 9.300 9.200 7.400 Z" fill="#000"/><path d="M7.600 2.600 C8.100 2 8.400 1.200 8.300 0.400 C7.600 0.400 6.800 0.900 6.300 1.400 C5.900 1.900 5.500 2.800 5.600 3.500 C6.400 3.600 7.100 3.200 7.600 2.600 Z" fill="#000"/></g></svg>
<svg style="position:absolute;left:1017px;top:530px;" width="15" height="15" viewBox="0 0 15 15" fill="none"><g transform="translate(0.4 0.2)"><circle cx="7" cy="7" r="6.700" fill="#fff"/><path d="M7 7 L1.200 3.650 A6.700 6.700 0 0 1 12.800 3.650 Z" fill="#ea4335"/><path d="M7 7 L12.800 3.650 A6.700 6.700 0 0 1 7 13.700 Z" fill="#fbbc04"/><path d="M7 7 L7 13.700 A6.700 6.700 0 0 1 1.200 3.650 Z" fill="#34a853"/><path d="M7 3.650 H12.800 A6.700 6.700 0 0 0 1.200 3.650 L4.100 8.680 Z" fill="#ea4335"/><path d="M9.900 8.680 L12.800 3.650 H7 Z" fill="#fbbc04"/><path d="M9.900 8.680 L7 13.700 A6.700 6.700 0 0 0 12.800 3.650 Z" fill="#fbbc04"/><path d="M4.100 8.680 L1.200 3.650 A6.700 6.700 0 0 0 7 13.700 L9.900 8.680 Z" fill="#34a853"/><circle cx="7" cy="7" r="3.300" fill="#fff"/><circle cx="7" cy="7" r="2.400" fill="#4285f4"/></g></svg>
<div style="position:absolute;left:1080px;top:521.8px;width:30.7px;height:31px;background:#5a00b4;border-radius:7px;"></div>
<svg style="position:absolute;left:1087px;top:529px;" width="17" height="17" viewBox="0 0 17 17" fill="none"><g transform="translate(0.9 0.3)"><circle cx="8" cy="8" r="6.900" stroke="#fff" stroke-width="1.1"/><path d="M6.300 5 L11 8 L6.300 11 Z" fill="#fff"/></g></svg>
<div style="position:absolute;left:1116px;top:521.8px;width:30.7px;height:31px;background:#f8f8f8;border-radius:7px;"></div>
<svg style="position:absolute;left:1123px;top:529px;" width="17" height="17" viewBox="0 0 17 17" fill="none"><g transform="translate(0.5 0.3)"><circle cx="8" cy="8" r="7.200" stroke="#222" stroke-width="1"/><circle cx="5.200" cy="8" r="0.800" fill="#222"/><circle cx="8" cy="8" r="0.800" fill="#222"/><circle cx="10.800" cy="8" r="0.800" fill="#222"/></g></svg>
</div>
</body></html>
